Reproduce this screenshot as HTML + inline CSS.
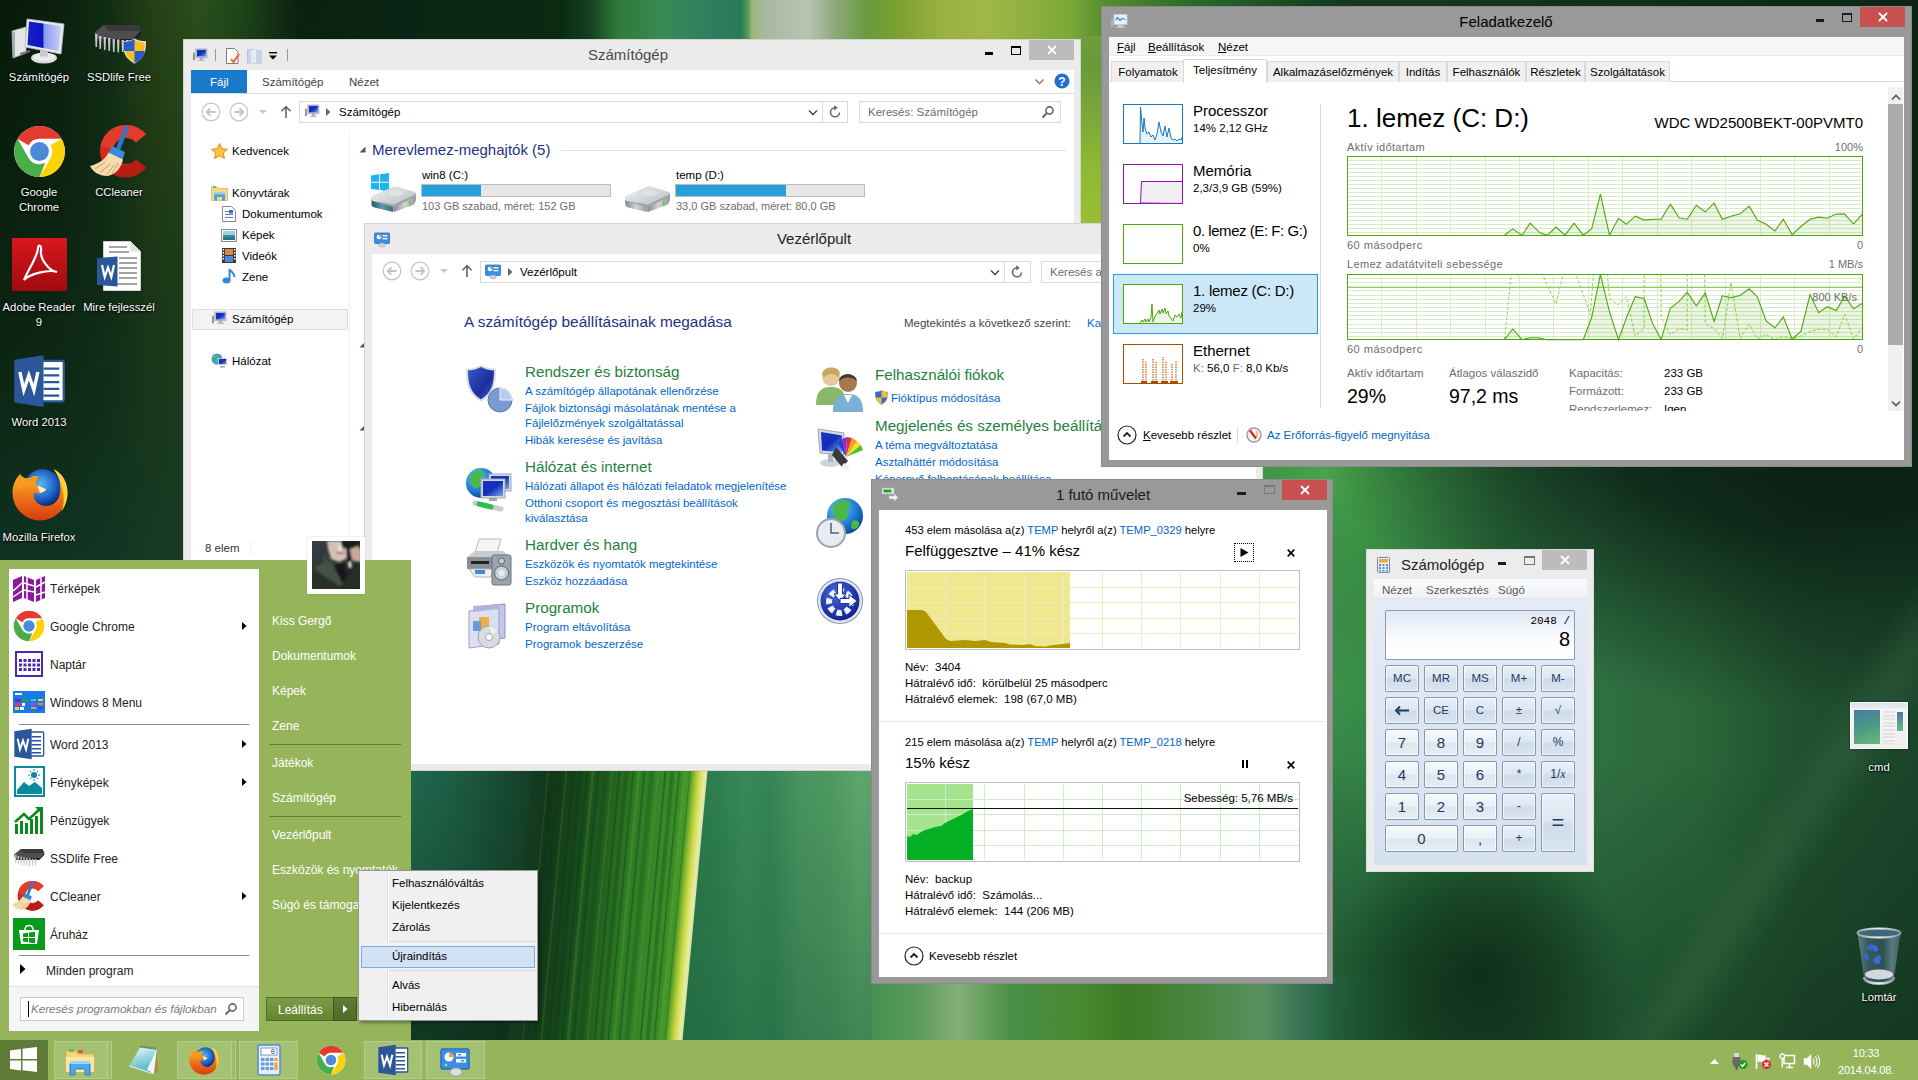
<!DOCTYPE html>
<html lang="hu"><head><meta charset="utf-8"><title>Asztal</title>
<style>
*{box-sizing:border-box;margin:0;padding:0}
html,body{width:1918px;height:1080px;overflow:hidden;background:#0f2a18}
body{position:relative;font-family:"Liberation Sans",sans-serif;font-size:11.5px;color:#000;line-height:1}
.a{position:absolute}
.t{position:absolute;white-space:nowrap;line-height:14px;height:14px}
.win{position:absolute;background:#ebebeb;border:1px solid #d4d4d4}
.win.act{background:#999;border:1px solid #8b8b8b}
.cl{position:absolute;background:#fff}
.ttl{position:absolute;font-size:15px;line-height:18px;white-space:nowrap;text-align:center;color:#000}
.lnk{color:#0066cc}
.g{color:#6d6d6d}
svg{position:absolute;overflow:visible}

.tab{position:absolute;top:24px;height:21px;background:#f0f0f0;border:1px solid #d9d9d9;border-bottom:none;white-space:nowrap;text-align:center;line-height:21px;font-size:11.5px;margin-left:1px}
.tab.sel{top:22px;height:24px;background:#fff;line-height:20px;z-index:2;margin-left:0}
.tmh{position:absolute;left:84px;font-size:15px;line-height:20px;height:20px;white-space:nowrap}
.tms{position:absolute;left:84px;font-size:11.5px;line-height:14px;height:14px;white-space:nowrap}

.cb{position:absolute;border:1px solid #8797aa;border-radius:2px;background:linear-gradient(#f6f9fc,#eaf0f7 48%,#dde6f1 52%,#e6edf6);text-align:center;font-size:15px;color:#1e395b;box-shadow:inset 0 0 0 1px rgba(255,255,255,.7)}
.cb.sm{font-size:11.500px}
.cb.op{font-size:12px;background:linear-gradient(#eaf0f8,#dce6f2 48%,#cfdcec 52%,#dae4f0)}
.cb.sm{background:linear-gradient(#eaf0f8,#dce6f2 48%,#cfdcec 52%,#dae4f0)}
.cb.eq{font-size:22px;background:linear-gradient(#eaf0f8,#dce6f2 48%,#cfdcec 52%,#dae4f0)}

.sm1{font-size:12px;color:#222;margin-top:1px}
.sm2{font-size:11.5px}
.tbb{position:absolute;top:1px;height:38px;background:#9fbc69;border:1px solid #b4cd8c}

.dl{position:absolute;margin-top:1px;text-align:center;color:#fff;font-size:11.3px;line-height:14px;height:14px;white-space:nowrap;text-shadow:0 1px 2px #000,0 0 2px #000}
/*BG*/
#bg{left:0;top:0;width:1918px;height:1080px}
</style></head><body>

<svg width="0" height="0" style="position:absolute"><defs>
<linearGradient id="scr" x1="0" y1="0" x2="1" y2="1"><stop offset="0" stop-color="#1a2fd0"/><stop offset=".5" stop-color="#1030b8"/><stop offset="1" stop-color="#7aa6f0"/></linearGradient>
<symbol id="i-comp" viewBox="0 0 16 16"><rect x="0.5" y="5" width="2" height="8" fill="#8a8f94"/><rect x="1" y="6" width="1" height="2" fill="#5fd04a"/><rect x="3.5" y="1" width="12" height="9.5" fill="#c8ccd2" stroke="#9aa0a8" stroke-width=".6"/><rect x="4.7" y="2" width="9.6" height="7" fill="url(#scr)"/><rect x="8" y="10.5" width="3" height="2" fill="#9aa0a8"/><rect x="6" y="12.5" width="7" height="1.3" fill="#b4b8be"/></symbol>
<symbol id="i-cp" viewBox="0 0 16 16"><rect x="0.5" y="1" width="15" height="10.5" rx="1" fill="#3c8fe0" stroke="#2a6fc0" stroke-width=".8"/><circle cx="5" cy="5" r="2.3" fill="#fff"/><path d="M5 5 L5 2.7 A2.3 2.3 0 0 1 7.3 5Z" fill="#f0a030"/><rect x="8.5" y="3.2" width="5" height="1.3" fill="#fff"/><rect x="8.5" y="6" width="5" height="1.3" fill="#fff"/><ellipse cx="8" cy="13" rx="3.2" ry="2" fill="#d0d4d8" stroke="#a0a4a8" stroke-width=".5"/></symbol>
<symbol id="i-back" viewBox="0 0 20 20"><circle cx="10" cy="10" r="8.8" fill="none" stroke="#c3c3c3" stroke-width="1.2"/><path d="M14.5 10H6M9.5 6.2L5.7 10l3.8 3.8" fill="none" stroke="#c3c3c3" stroke-width="1.8"/></symbol>
<symbol id="i-fwd" viewBox="0 0 20 20"><circle cx="10" cy="10" r="8.8" fill="none" stroke="#c3c3c3" stroke-width="1.2"/><path d="M5.5 10H14M10.5 6.2l3.8 3.8-3.8 3.8" fill="none" stroke="#c3c3c3" stroke-width="1.8"/></symbol>
<symbol id="i-up" viewBox="0 0 12 14"><path d="M6 13V2M1.5 6.2L6 1.7l4.5 4.5" fill="none" stroke="#666" stroke-width="1.6"/></symbol>
<symbol id="i-chev" viewBox="0 0 10 8"><path d="M1 1.5l4 4 4-4" fill="none" stroke="#555" stroke-width="1.7"/></symbol>
<symbol id="i-refresh" viewBox="0 0 14 14"><path d="M11.5 7.5a4.5 4.5 0 1 1-4.5-4.7" fill="none" stroke="#666" stroke-width="1.6"/><path d="M6.2 0.2l3.6 2.6-3.6 2.6z" fill="#666"/></symbol>
<symbol id="i-mag" viewBox="0 0 14 14"><circle cx="8.5" cy="5.5" r="3.6" fill="none" stroke="#666" stroke-width="1.6"/><path d="M6 8L1.5 12.5" stroke="#666" stroke-width="2"/></symbol>
<symbol id="i-x" viewBox="0 0 10 10"><path d="M1 1l8 8M9 1l-8 8" stroke="#fff" stroke-width="1.8"/></symbol>
</defs></svg>

<svg width="0" height="0" style="position:absolute"><defs>
<radialGradient id="ffg" cx=".45" cy=".4" r=".6"><stop offset="0" stop-color="#5ab8f0"/><stop offset=".7" stop-color="#1a5ac0"/><stop offset="1" stop-color="#0a2a80"/></radialGradient>
<linearGradient id="ffo" x1="0" y1="0" x2="0" y2="1"><stop offset="0" stop-color="#f8c830"/><stop offset=".5" stop-color="#f07a18"/><stop offset="1" stop-color="#d83a10"/></linearGradient>
<symbol id="i-chrome" viewBox="0 0 48 48"><circle cx="24" cy="24" r="23" fill="#fff"/><path d="M24 1a23 23 0 0 1 19.900 11.500H24a11.500 11.500 0 0 0-10 5.800L4.100 12.500A23 23 0 0 1 24 1z" fill="#e33b2e"/><path d="M43.900 12.500a23 23 0 0 1-19.900 34.500l10-17.200a11.500 11.500 0 0 0 0-11.500z" fill="#fdd308"/><path d="M24 47A23 23 0 0 1 4.100 12.500l10 17.300a11.500 11.500 0 0 0 10 5.700l5-1z" fill="#4aae48"/><circle cx="24" cy="24" r="10.500" fill="#fff"/><circle cx="24" cy="24" r="8.500" fill="#4a8ad8"/></symbol>
<symbol id="i-ff" viewBox="0 0 48 48"><circle cx="26" cy="20" r="15" fill="url(#ffg)"/><path d="M8 9C10 12 13 13 16 12C18 10 20 10 23 11C20 14 20 16 22 18L29 21C27 24 23 25 19 24C18 30 24 36 32 34C38 32 41 26 40 18C40 12 38 8 35 5C42 8 46 16 46 24C46 36 36 46 24 46C12 46 2 36 2 24C2 18 4 13 8 9Z" fill="url(#ffo)"/><path d="M35 5C42 8 46 16 46 24C46 30 44 35 41 39C45 30 43 17 35 5Z" fill="#fbd23a"/><path d="M8 9C10 12 13 13 16 12C18 10 20 10 23 11C21 13 20 15 21 17C16 15 10 17 7 22C6 18 6 14 8 9Z" fill="#f89a1e"/><path d="M22 18l7 3c-1 1.500-3 2.500-5 3z" fill="#fff" opacity=".85"/></symbol>
<symbol id="i-word" viewBox="0 0 48 48"><rect x="20" y="6" width="26" height="36" rx="1.500" fill="#fff" stroke="#2b579a" stroke-width="2"/><path d="M28 13h14M28 19h14M28 25h14M28 31h14M28 37h14" stroke="#2b579a" stroke-width="2.200"/><path d="M2 5l26-4v46l-26-4z" fill="#2b579a"/><path d="M7 16l3.500 16 4.500-13 4.500 13 3.500-16" fill="none" stroke="#fff" stroke-width="3"/></symbol>
<symbol id="i-cc" viewBox="0 0 60 55"><path d="M55.900 10.300A26 26 0 1 0 55.900 43.700L46 35.400A13 13 0 1 1 46 18.600Z" fill="#d8281c"/><path d="M55.900 10.300A26 26 0 0 0 10.500 22L23.200 24.500A13 13 0 0 1 46 18.600Z" fill="#e23c2c"/><path d="M14 42A26 26 0 0 0 55.900 43.700L46 35.400A13 13 0 0 1 25 36Z" fill="#b81c14"/><path d="M36.500 4L28 25" stroke="#2a78d4" stroke-width="4.500" stroke-linecap="round"/><path d="M22 22l13 6-2.500 8-14-7z" fill="#3a8ae0"/><path d="M18.500 28.500L33 35.500C31 44 26 50 18 52C10 52.500 3 48 0 42C8 40 15 36 18.500 28.500Z" fill="#f4dcae"/><path d="M5 45l10-7M10 49l10-9M16 52l8-11M22 50l6-11" stroke="#d8b070" stroke-width="1.200"/></symbol>
<symbol id="i-chip" viewBox="0 0 50 30"><path d="M2 9l10-8h34l3 6-8 8H5z" fill="#4e4e4e"/><path d="M12 1h34l3 6H16z" fill="#3a3a3a"/><path d="M2 9l3 6h36l8-8v3l-8 8H5l-3-6z" fill="#1e1e1e"/><g fill="#c4c8cc"><path d="M3 10h2.500l-.5 13h-1.500z"/><path d="M7 12h2.500l-.5 13h-1.500z"/><path d="M11.500 13h2.500l-.5 13h-1.500z"/><path d="M16 14h2.500l-.5 13h-1.500z"/><path d="M20.500 15h2.500l-.5 13h-1.500z"/><path d="M25 15.500h2.500l-.5 13h-1.500z"/><path d="M29.500 16h2.500l-.5 12h-1.500z"/><path d="M34 16h2.500l-.5 11h-1.500z"/></g></symbol>
<symbol id="i-shield" viewBox="0 0 20 22"><path d="M10 .5c3 2 6 2.500 9.500 2.500 0 9-1.500 14-9.500 18.500C2 17 .5 12 .5 3 4 3 7 2.500 10 .5z" fill="#f4c020" stroke="#e8e8e8"/><path d="M10 .5v10.500H1C.5 8 .5 5.500.5 3 4 3 7 2.500 10 .5z" fill="#2a5ac8"/><path d="M10 11h9c-1 5-3.500 8-9 10.500z" fill="#2a5ac8"/></symbol>
<symbol id="i-fold" viewBox="0 0 32 32"><path d="M2 6h10l2 3h16v18H2z" fill="#f4d67a" stroke="#d8b050"/><rect x="5" y="4" width="5" height="3" fill="#6cc04a"/><rect x="14" y="5" width="5" height="3" fill="#e05a3a"/><path d="M2 12h28v15H2z" fill="#fae8a0"/><path d="M6 18h20v12h-5v-6H11v6H6z" fill="#4aa8ec" stroke="#2a80c8"/><rect x="6" y="16" width="20" height="3" fill="#9ad4f8"/></symbol>
<symbol id="i-calc" viewBox="0 0 32 32"><rect x="5" y="1" width="22" height="30" rx="2" fill="#e4eefa" stroke="#5a8ac8" stroke-width="1.500"/><rect x="8" y="4" width="16" height="7" fill="#fff" stroke="#7a9ac8"/><text x="22" y="10" font-size="7" text-anchor="end" fill="#333" font-family="Liberation Mono,monospace">0</text><g fill="#6a9ad8"><rect x="8" y="14" width="3.500" height="3"/><rect x="12.500" y="14" width="3.500" height="3"/><rect x="17" y="14" width="3.500" height="3"/><rect x="8" y="18.500" width="3.500" height="3"/><rect x="12.500" y="18.500" width="3.500" height="3"/><rect x="17" y="18.500" width="3.500" height="3"/><rect x="8" y="23" width="3.500" height="3"/><rect x="12.500" y="23" width="3.500" height="3"/><rect x="17" y="23" width="3.500" height="3"/></g><rect x="21.500" y="14" width="3" height="3" fill="#f0a030"/><rect x="21.500" y="18.500" width="3" height="7.500" fill="#f0a030"/></symbol>
<symbol id="i-note" viewBox="0 0 32 32"><defs><linearGradient id="npg" x1=".3" y1="0" x2=".6" y2="1"><stop offset="0" stop-color="#e4f2f8"/><stop offset=".5" stop-color="#8ad0dc"/><stop offset="1" stop-color="#4aaec4"/></linearGradient></defs><path d="M28.700 4.700l1.500 21.500-4.400 2.600z" fill="#b08848"/><path d="M12 2.500l16.700 2.200-2.900 24.100L1.300 21z" fill="url(#npg)"/><path d="M1.300 21l24.500 7.800" stroke="#e8f0f4" stroke-width="1.200"/><path d="M28.700 4.700l-2.900 24.100-6.800-4.300z" fill="#f2f6f8"/><path d="M12.500 1.500l16 2.200" stroke="#5a6a7a" stroke-width="2" stroke-dasharray="1 .8"/></symbol>
<symbol id="i-cpl" viewBox="0 0 32 32"><rect x="2" y="3" width="28" height="20" rx="1.500" fill="#3c8fe0" stroke="#2a6fc0" stroke-width="1.500"/><circle cx="10" cy="11" r="4.500" fill="#fff"/><path d="M10 11V6.500A4.500 4.500 0 0 1 14.500 11z" fill="#f0a030"/><rect x="17" y="7" width="10" height="3.500" fill="#fff"/><rect x="17" y="13" width="10" height="3.500" fill="#fff"/><rect x="19" y="8" width="3" height="1.500" fill="#3c8fe0"/><rect x="22" y="14" width="3" height="1.500" fill="#3c8fe0"/><circle cx="7" cy="19" r="1.200" fill="#8f8"/><ellipse cx="17" cy="26" rx="6" ry="4" fill="#dcdfe2" stroke="#a0a4a8"/></symbol>
<symbol id="i-arr" viewBox="0 0 5 8"><path d="M0 0l4.500 4-4.500 4z" fill="#000"/></symbol>
</defs></svg>
<!--BACKGROUND-->
<svg id="bg" class="a" width="1918" height="1080" viewBox="0 0 1918 1080">
<defs>
<linearGradient id="gTop" gradientUnits="userSpaceOnUse" x1="0" x2="1918" y1="0" y2="0">
<stop offset="0.0000" stop-color="#081b0a"/><stop offset="0.0313" stop-color="#0a200d"/><stop offset="0.0574" stop-color="#112e15"/><stop offset="0.0782" stop-color="#243f15"/><stop offset="0.1043" stop-color="#2a4f1c"/><stop offset="0.1251" stop-color="#1f4518"/><stop offset="0.1564" stop-color="#0a2010"/><stop offset="0.2086" stop-color="#0a2515"/><stop offset="0.2503" stop-color="#0a2814"/><stop offset="0.2920" stop-color="#0a2a12"/><stop offset="0.3071" stop-color="#12401f"/><stop offset="0.3222" stop-color="#2f7a3a"/><stop offset="0.3452" stop-color="#3a8a55"/><stop offset="0.3681" stop-color="#2f8060"/><stop offset="0.3863" stop-color="#2a7a5a"/><stop offset="0.3900" stop-color="#5a9a5a"/><stop offset="0.3921" stop-color="#9ab878"/><stop offset="0.3983" stop-color="#a8b8a0"/><stop offset="0.4213" stop-color="#b8c4b0"/><stop offset="0.4364" stop-color="#8aa878"/><stop offset="0.4520" stop-color="#6a9a40"/><stop offset="0.4672" stop-color="#7aa030"/><stop offset="0.4901" stop-color="#98b040"/><stop offset="0.5125" stop-color="#a0b848"/><stop offset="0.5355" stop-color="#90b040"/><stop offset="0.5584" stop-color="#7aa838"/><stop offset="0.5735" stop-color="#5a9030"/><stop offset="0.6204" stop-color="#2a6a2a"/><stop offset="0.6986" stop-color="#143a20"/><stop offset="1.0000" stop-color="#0d2415"/>
</linearGradient>
<linearGradient id="gLeftV" x1="0" x2="0" y1="0" y2="1">
<stop offset="0" stop-color="#0c2812" stop-opacity="0"/><stop offset=".45" stop-color="#0e2a16" stop-opacity=".45"/><stop offset="1" stop-color="#123a2a" stop-opacity=".85"/>
</linearGradient>
<linearGradient id="gStrip" x1="0" x2="0" y1="0" y2="1">
<stop offset="0" stop-color="#6f9e3a"/><stop offset=".15" stop-color="#679a3a"/><stop offset=".4" stop-color="#7aa838"/><stop offset=".7" stop-color="#8fba32"/><stop offset="1" stop-color="#98c030"/>
</linearGradient>
<linearGradient id="gL" gradientUnits="userSpaceOnUse" x1="400" x2="560" y1="0" y2="0">
<stop offset="0" stop-color="#216a50"/><stop offset=".3" stop-color="#1f6048"/><stop offset=".6" stop-color="#194e36"/><stop offset=".85" stop-color="#153e26"/><stop offset="1" stop-color="#143a22"/>
</linearGradient>
<linearGradient id="gLV" x1="0" x2="0" y1="0" y2="1">
<stop offset="0" stop-color="#0a2814" stop-opacity="0"/><stop offset=".45" stop-color="#0a2814" stop-opacity=".25"/><stop offset="1" stop-color="#0a2814" stop-opacity=".8"/>
</linearGradient>
<linearGradient id="gR" gradientUnits="userSpaceOnUse" x1="680" x2="880" y1="0" y2="0">
<stop offset="0" stop-color="#2a7848"/><stop offset=".2" stop-color="#2f8050"/><stop offset=".32" stop-color="#3a8a58"/><stop offset=".45" stop-color="#358555"/><stop offset=".6" stop-color="#4a9560"/><stop offset=".75" stop-color="#4f9a62"/><stop offset=".9" stop-color="#5fa86c"/><stop offset="1" stop-color="#5aa568"/>
</linearGradient>
<linearGradient id="gRV" x1="0" x2="0" y1="0" y2="1">
<stop offset="0" stop-color="#1a5a38" stop-opacity="0"/><stop offset="1" stop-color="#1a5a38" stop-opacity=".45"/>
</linearGradient>
<linearGradient id="gU" gradientUnits="userSpaceOnUse" x1="860" x2="1420" y1="0" y2="0">
<stop offset="0" stop-color="#3f8f4e"/><stop offset=".1" stop-color="#5a9a5a"/><stop offset=".175" stop-color="#85b078"/><stop offset=".27" stop-color="#4a8f48"/><stop offset=".4" stop-color="#48882f"/><stop offset=".477" stop-color="#3f7a25"/><stop offset=".6" stop-color="#4a8540"/><stop offset=".715" stop-color="#5a9060"/><stop offset=".785" stop-color="#3a7555"/><stop offset=".82" stop-color="#2c6a48"/><stop offset=".845" stop-color="#266242" stop-opacity=".75"/><stop offset=".9" stop-color="#205a3a" stop-opacity=".3"/><stop offset="1" stop-color="#1a4f35" stop-opacity="0"/>
</linearGradient>
<linearGradient id="gBig" gradientUnits="userSpaceOnUse" x1="1333" y1="0" x2="1918" y2="0">
<stop offset="0" stop-color="#2f7a45"/><stop offset=".115" stop-color="#2d7542"/><stop offset=".285" stop-color="#2b6c3d"/><stop offset=".455" stop-color="#2f7042"/><stop offset=".627" stop-color="#2b6639"/><stop offset=".8" stop-color="#204f2f"/><stop offset="1" stop-color="#1a452a"/>
</linearGradient>
<radialGradient id="gBright" gradientUnits="userSpaceOnUse" cx="1325" cy="470" r="230"><stop offset="0" stop-color="#4aa64a" stop-opacity=".95"/><stop offset=".4" stop-color="#429c47" stop-opacity=".6"/><stop offset="1" stop-color="#3a8a45" stop-opacity="0"/></radialGradient>
<radialGradient id="gDark" gradientUnits="userSpaceOnUse" cx="1800" cy="380" r="330" gradientTransform="translate(1800 380) scale(1.5 1) translate(-1800 -380)"><stop offset="0" stop-color="#081a10" stop-opacity=".95"/><stop offset=".45" stop-color="#081c12" stop-opacity=".8"/><stop offset=".75" stop-color="#081c12" stop-opacity=".35"/><stop offset="1" stop-color="#081c12" stop-opacity="0"/></radialGradient><radialGradient id="gBright2" gradientUnits="userSpaceOnUse" cx="1335" cy="690" r="210"><stop offset="0" stop-color="#45a04c" stop-opacity=".6"/><stop offset="1" stop-color="#3a8a45" stop-opacity="0"/></radialGradient>
<radialGradient id="gDark2" gradientUnits="userSpaceOnUse" cx="1480" cy="975" r="150"><stop offset="0" stop-color="#06200f" stop-opacity=".7"/><stop offset=".5" stop-color="#082412" stop-opacity=".45"/><stop offset="1" stop-color="#082412" stop-opacity="0"/></radialGradient>
<linearGradient id="gBotV" gradientUnits="userSpaceOnUse" x1="0" y1="760" x2="0" y2="1045"><stop offset="0" stop-color="#0c2a18" stop-opacity="0"/><stop offset="1" stop-color="#0c2a18" stop-opacity=".5"/></linearGradient>
<linearGradient id="gBlade" gradientUnits="userSpaceOnUse" x1="-175" x2="0" y1="0" y2="0">
<stop offset="0" stop-color="#143a22"/><stop offset=".12" stop-color="#12381a"/><stop offset=".3" stop-color="#174a1c"/><stop offset=".45" stop-color="#22601f"/><stop offset=".6" stop-color="#2d7a24"/><stop offset=".75" stop-color="#348827"/><stop offset=".86" stop-color="#3a8e28"/><stop offset=".905" stop-color="#4a9a2a"/><stop offset=".925" stop-color="#8ab82f"/><stop offset=".955" stop-color="#d0dc4a"/><stop offset=".985" stop-color="#e8eca0"/><stop offset="1" stop-color="#cfe0b0"/>
</linearGradient>
<pattern id="stripes" width="46" height="10" patternUnits="userSpaceOnUse"><rect x="3" width="2" height="10" fill="#0a3010" opacity=".35"/><rect x="9" width="4" height="10" fill="#0a3010" opacity=".25"/><rect x="17" width="1.500" height="10" fill="#0a3010" opacity=".4"/><rect x="22" width="3" height="10" fill="#7ac040" opacity=".18"/><rect x="28" width="2" height="10" fill="#0a3010" opacity=".3"/><rect x="34" width="5" height="10" fill="#0a3010" opacity=".2"/><rect x="42" width="1.500" height="10" fill="#7ac040" opacity=".2"/></pattern>
<filter id="bl2" x="-20%" y="-20%" width="140%" height="140%"><feGaussianBlur stdDeviation="14"/></filter>
</defs>
<rect x="0" y="0" width="1918" height="1080" fill="#12331e"/>
<rect x="0" y="0" width="1918" height="600" fill="url(#gTop)"/>
<rect x="0" y="0" width="400" height="600" fill="url(#gLeftV)"/>
<rect x="1081" y="36" width="21" height="194" fill="url(#gStrip)"/>
<rect x="1250" y="440" width="668" height="620" fill="url(#gBig)"/>
<rect x="1250" y="440" width="668" height="620" fill="url(#gBright)"/><rect x="1250" y="440" width="668" height="620" fill="url(#gBright2)"/>
<rect x="1250" y="440" width="668" height="620" fill="url(#gDark)"/>
<rect x="1250" y="760" width="668" height="300" fill="url(#gBotV)"/>
<rect x="1250" y="760" width="668" height="300" fill="url(#gDark2)"/>
<g filter="url(#bl2)"><path d="M1935 585 L1935 650 L1660 1055 L1620 1055 Z" fill="#4a7a50" opacity=".3"/></g>
<rect x="400" y="760" width="170" height="290" fill="url(#gL)"/>
<rect x="400" y="760" width="170" height="290" fill="url(#gLV)"/>
<rect x="670" y="760" width="215" height="290" fill="url(#gR)"/>
<rect x="670" y="760" width="215" height="290" fill="url(#gRV)"/>
<rect x="872" y="975" width="548" height="70" fill="url(#gU)"/>
<g transform="translate(707.500,771) skewX(-5.300)"><rect x="-175" y="-12" width="175" height="300" fill="url(#gBlade)"/><rect x="-160" y="-12" width="143" height="300" fill="url(#stripes)"/></g>
</svg>

<!--WINDOWS PLACEHOLDER-->
<!--EXPLORER-->
<div class="win" id="ex" style="left:183px;top:39px;width:898px;height:530px">
<svg class="a" style="left:8px;top:8px" width="16" height="15"><use href="#i-comp"/></svg>
<div class="a" style="left:31px;top:9px;width:1px;height:12px;background:#9a9a9a"></div>
<svg class="a" style="left:41px;top:8px" width="17" height="16" viewBox="0 0 17 16"><path d="M1.5 .5h8l3.5 3.5v11.5h-11.5z" fill="#fff" stroke="#7a7a7a"/><path d="M6 11l2.5 3 5.5-8" fill="none" stroke="#e8703a" stroke-width="2.2"/></svg>
<svg class="a" style="left:63px;top:8px" width="15" height="16" viewBox="0 0 15 16"><path d="M.5 1.5h6l1 1.5h6.500v12h-13.500z" fill="#c5d5ea" stroke="#b4c4dc"/><rect x="4" y="2" width="5" height="13" fill="#e2ebf6"/></svg>
<svg class="a" style="left:85px;top:12px" width="8" height="8" viewBox="0 0 8 8"><rect x="0" y="0" width="8" height="1.4" fill="#000"/><path d="M0 3.5h8l-4 4z" fill="#000"/></svg>
<div class="a" style="left:103px;top:9px;width:1px;height:12px;background:#9a9a9a"></div>
<div class="ttl" style="left:344px;top:6px;width:200px;color:#4a4a4a">Számítógép</div>
<div class="a" style="left:801px;top:12px;width:8px;height:2.500px;background:#000"></div>
<div class="a" style="left:827px;top:6px;width:10px;height:9px;border:1px solid #000;border-top-width:2px"></div>
<div class="a" style="left:845px;top:0px;width:45px;height:20px;background:#bcbcbc"><svg style="left:18px;top:5px" width="10" height="10"><use href="#i-x"/></svg></div>
<div class="cl" style="left:7px;top:30px;width:883px;height:492px">
 <!--ribbon-->
 <div class="a" style="left:0;top:0;width:56px;height:23px;background:#1979ca"></div>
 <div class="t" style="left:19px;top:5px;color:#fff">Fájl</div>
 <div class="t" style="left:71px;top:5px;color:#444">Számítógép</div>
 <div class="t" style="left:158px;top:5px;color:#444">Nézet</div>
 <svg class="a" style="left:843px;top:8px" width="11" height="8" viewBox="0 0 10 8"><path d="M1 1.5l4 4 4-4" fill="none" stroke="#8a8a8a" stroke-width="1.7"/></svg>
 <svg class="a" style="left:863px;top:3px" width="16" height="16" viewBox="0 0 16 16"><circle cx="8" cy="8" r="7.5" fill="#1e6fd0"/><text x="8" y="12.5" font-size="12" font-weight="bold" fill="#fff" text-anchor="middle" font-family="Liberation Sans,sans-serif">?</text></svg>
 <div class="a" style="left:0;top:23px;width:883px;height:1px;background:#dadbdc"></div>
 <!--address-->
 <svg class="a" style="left:10px;top:32px" width="20" height="20"><use href="#i-back"/></svg>
 <svg class="a" style="left:38px;top:32px" width="20" height="20"><use href="#i-fwd"/></svg>
 <svg class="a" style="left:68px;top:40px" width="8" height="4" viewBox="0 0 8 4"><path d="M0 0h8l-4 4z" fill="#c8c8c8"/></svg>
 <svg class="a" style="left:89px;top:35px" width="12" height="14"><use href="#i-up"/></svg>
 <div class="a" style="left:108px;top:31px;width:549px;height:22px;border:1px solid #d9d9d9;background:#fff">
  <svg class="a" style="left:4px;top:2px" width="16" height="15"><use href="#i-comp"/></svg>
  <svg class="a" style="left:26px;top:6px" width="5" height="8" viewBox="0 0 5 8"><path d="M0 0l4.500 4-4.500 4z" fill="#666"/></svg>
  <div class="t" style="left:39px;top:3px">Számítógép</div>
  <svg class="a" style="left:508px;top:7px" width="10" height="8"><use href="#i-chev"/></svg>
  <div class="a" style="left:522px;top:0;width:1px;height:20px;background:#d9d9d9"></div>
  <svg class="a" style="left:528px;top:3px" width="14" height="14"><use href="#i-refresh"/></svg>
 </div>
 <div class="a" style="left:668px;top:31px;width:202px;height:22px;border:1px solid #d9d9d9;background:#fff">
  <div class="t g" style="left:8px;top:3px">Keresés: Számítógép</div>
  <svg class="a" style="left:181px;top:3px" width="14" height="14"><use href="#i-mag"/></svg>
 </div>
 <!--nav-->
 <div class="a" style="left:158px;top:61px;width:1px;height:431px;background:#f0f0f0"></div>
 <svg class="a" style="left:20px;top:73px" width="17" height="16" viewBox="0 0 17 16"><path d="M8.500 .5l2.400 5.200 5.600.6-4.200 3.800 1.200 5.500-5-2.900-5 2.900 1.200-5.500L.5 6.300l5.600-.6z" fill="#fbc53c" stroke="#e8862a" stroke-width="1"/></svg>
 <div class="t" style="left:41px;top:74px">Kedvencek</div>
 <svg class="a" style="left:20px;top:115px" width="17" height="16" viewBox="0 0 17 16"><path d="M.5 2h6l1 1.500h9v12h-16z" fill="#f3d98a" stroke="#d8b860" stroke-width=".8"/><rect x="2" y="1" width="3" height="2" fill="#6cc04a"/><path d="M3 9h11v6.500h-3v-3.500h-5v3.500h-3z" fill="#4aa3e8"/><rect x="3" y="7.500" width="11" height="2" fill="#8cc8f4"/></svg>
 <div class="t" style="left:41px;top:116px">Könyvtárak</div>
 <svg class="a" style="left:31px;top:136px" width="14" height="16" viewBox="0 0 14 16"><path d="M.5 .5h9l4 4v11h-13z" fill="#fff" stroke="#8a8a8a"/><rect x="3" y="5" width="4" height="1" fill="#5a7ab8"/><rect x="3" y="8" width="8" height="1" fill="#5a7ab8"/><rect x="3" y="11" width="8" height="1" fill="#5a7ab8"/><rect x="7" y="4" width="4" height="3.500" fill="#3a6ad0"/></svg>
 <div class="t" style="left:51px;top:137px">Dokumentumok</div>
 <svg class="a" style="left:30px;top:159px" width="16" height="13" viewBox="0 0 16 13"><rect x=".5" y=".5" width="15" height="12" fill="#fff" stroke="#8a8a8a"/><rect x="2" y="2" width="12" height="5" fill="#9ad0f0"/><rect x="2" y="6" width="12" height="5" fill="#3a9a5a"/><rect x="2" y="8.500" width="12" height="2.500" fill="#2a6ab8"/></svg>
 <div class="t" style="left:51px;top:158px">Képek</div>
 <svg class="a" style="left:31px;top:178px" width="14" height="15" viewBox="0 0 14 15"><rect x="0" y="0" width="14" height="15" fill="#3a3a3a"/><rect x="3" y="1" width="8" height="6" fill="#d88a4a"/><rect x="3" y="8" width="8" height="6" fill="#4a8ad8"/><g fill="#fff"><rect x=".7" y="1" width="1.400" height="1.600"/><rect x=".7" y="4" width="1.400" height="1.600"/><rect x=".7" y="7" width="1.400" height="1.600"/><rect x=".7" y="10" width="1.400" height="1.600"/><rect x="12" y="1" width="1.400" height="1.600"/><rect x="12" y="4" width="1.400" height="1.600"/><rect x="12" y="7" width="1.400" height="1.600"/><rect x="12" y="10" width="1.400" height="1.600"/></g></svg>
 <div class="t" style="left:51px;top:179px">Videók</div>
 <svg class="a" style="left:31px;top:198px" width="14" height="16" viewBox="0 0 14 16"><ellipse cx="4.500" cy="12.500" rx="4" ry="3" fill="#2a8ae0"/><path d="M7.500 12.500V1c1 2.500 5 3.500 5 8" fill="none" stroke="#2a8ae0" stroke-width="2"/></svg>
 <div class="t" style="left:51px;top:200px">Zene</div>
 <div class="a" style="left:1px;top:239px;width:156px;height:21px;background:#f3f3f3;border:1px solid #dedede"></div>
 <svg class="a" style="left:20px;top:241px" width="16" height="15"><use href="#i-comp"/></svg>
 <div class="t" style="left:41px;top:242px">Számítógép</div>
 <svg class="a" style="left:20px;top:283px" width="17" height="16" viewBox="0 0 17 16"><circle cx="6" cy="6" r="5.500" fill="#3a9ad8"/><path d="M2 5c2-3 5-2 5 0s-3 3-2 5" fill="none" stroke="#5ac04a" stroke-width="2"/><rect x="7" y="5" width="9" height="7" fill="#c8ccd2"/><rect x="8" y="6" width="7" height="5" fill="url(#scr)"/><rect x="9" y="13" width="5" height="1.500" fill="#9aa0a8"/></svg>
 <div class="t" style="left:41px;top:284px">Hálózat</div>
 <!--content-->
 <svg class="a" style="left:168px;top:76px" width="7" height="7" viewBox="0 0 7 7"><path d="M6.500 .5v6h-6z" fill="#555"/></svg>
 <svg class="a" style="left:168px;top:271px" width="7" height="7" viewBox="0 0 7 7"><path d="M6.500 .5v6h-6z" fill="#555"/></svg>
 <svg class="a" style="left:168px;top:354px" width="7" height="7" viewBox="0 0 7 7"><path d="M6.500 .5v6h-6z" fill="#555"/></svg>
 <div class="t" style="left:181px;top:71px;font-size:15px;line-height:18px;height:18px;color:#1e3287">Merevlemez-meghajtók (5)</div>
 <div class="a" style="left:368px;top:80px;width:507px;height:1px;background:#e2e2e2"></div>
 <svg class="a" style="left:178px;top:102px" width="48" height="40" viewBox="0 0 48 40"><defs><linearGradient id="dtop" x1="0" y1="0" x2="1" y2="1"><stop offset="0" stop-color="#f4f5f6"/><stop offset="1" stop-color="#b8bcc0"/></linearGradient><linearGradient id="dfc" x1="0" y1="0" x2="1" y2="0"><stop offset="0" stop-color="#2a5a6a"/><stop offset=".5" stop-color="#5a9ab0"/><stop offset="1" stop-color="#3a6a7a"/></linearGradient><linearGradient id="dfg" x1="0" y1="0" x2="1" y2="0"><stop offset="0" stop-color="#8a8e92"/><stop offset=".5" stop-color="#d0d4d8"/><stop offset="1" stop-color="#9a9ea2"/></linearGradient></defs><g fill="#1fb4f0"><path d="M2 3.500l8-1.200v7.400H2zM11 2.200L20 1v8.700h-9zM2 10.700h8v7.400l-8-1.200zM11 10.700h9v8.700l-9-1.300z"/></g><path d="M2 27q0-2 2-3l20-9q2-1 4 0l17 5q2 1 2 3v5q0 2-2 3l-19 8q-2 1-4 0L4 35q-2-1-2-3z" fill="#a0a4a8"/><path d="M2 27q0-2 2-3l20-9q2-1 4 0l17 5q2 1 0 3l-19 9q-2 1-4 0L4 29q-2-1-2-2z" fill="url(#dtop)"/><path d="M3 29l21 6v5L4 35q-1-1-1-3z" fill="url(#dfc)"/><path d="M25 35l21-10v5q0 2-2 3l-19 7z" fill="url(#dfg)"/><ellipse cx="26" cy="21" rx="9" ry="4" fill="#dfe1e3" stroke="#c0c4c8" stroke-width=".5"/><path d="M40 29l1.500-.7v5l-1.500.7z" fill="#38e038"/></svg>
 <div class="t" style="left:231px;top:98px">win8 (C:)</div>
 <div class="a" style="left:230px;top:114px;width:190px;height:13px;border:1px solid #bcbcbc;background:#e6e6e6"><div class="a" style="left:0;top:0;width:59px;height:11px;background:#26a0da"></div></div>
 <div class="t g" style="left:231px;top:129px;font-size:11px">103 GB szabad, méret: 152 GB</div>
 <svg class="a" style="left:432px;top:114px" width="48" height="28" viewBox="0 12 48 28"><path d="M2 27q0-2 2-3l20-9q2-1 4 0l17 5q2 1 2 3v5q0 2-2 3l-19 8q-2 1-4 0L4 35q-2-1-2-3z" fill="#a0a4a8"/><path d="M2 27q0-2 2-3l20-9q2-1 4 0l17 5q2 1 0 3l-19 9q-2 1-4 0L4 29q-2-1-2-2z" fill="url(#dtop)"/><path d="M3 29l21 6v5L4 35q-1-1-1-3z" fill="url(#dfg)"/><path d="M25 35l21-10v5q0 2-2 3l-19 7z" fill="url(#dfg)"/><ellipse cx="26" cy="21" rx="9" ry="4" fill="#dfe1e3" stroke="#c0c4c8" stroke-width=".5"/><path d="M40 29l1.500-.7v5l-1.500.7z" fill="#38e038"/></svg>
 <div class="t" style="left:485px;top:98px">temp (D:)</div>
 <div class="a" style="left:484px;top:114px;width:190px;height:13px;border:1px solid #bcbcbc;background:#e6e6e6"><div class="a" style="left:0;top:0;width:110px;height:11px;background:#26a0da"></div></div>
 <div class="t g" style="left:485px;top:129px;font-size:11px">33,0 GB szabad, méret: 80,0 GB</div>
 <!--status-->
 <div class="t" style="left:14px;top:471px;color:#333">8 elem</div>
 <div class="a" style="left:59px;top:470px;width:1px;height:16px;background:#f0f0f0"></div>
</div>
</div>
<!--CONTROL PANEL-->
<div class="win" id="cp" style="left:364px;top:223px;width:899px;height:548px">
<svg class="a" style="left:9px;top:8px" width="16" height="16"><use href="#i-cp"/></svg>
<div class="ttl" style="left:349px;top:6px;width:200px;color:#222">Vezérlőpult</div>
<div class="cl" style="left:7px;top:30px;width:884px;height:510px">
 <svg class="a" style="left:10px;top:7px" width="20" height="20"><use href="#i-back"/></svg>
 <svg class="a" style="left:38px;top:7px" width="20" height="20"><use href="#i-fwd"/></svg>
 <svg class="a" style="left:68px;top:15px" width="8" height="4" viewBox="0 0 8 4"><path d="M0 0h8l-4 4z" fill="#c8c8c8"/></svg>
 <svg class="a" style="left:89px;top:10px" width="12" height="14"><use href="#i-up"/></svg>
 <div class="a" style="left:108px;top:7px;width:551px;height:22px;border:1px solid #d9d9d9;background:#fff">
  <svg class="a" style="left:4px;top:2px" width="16" height="16"><use href="#i-cp"/></svg>
  <svg class="a" style="left:27px;top:6px" width="5" height="8" viewBox="0 0 5 8"><path d="M0 0l4.500 4-4.500 4z" fill="#666"/></svg>
  <div class="t" style="left:39px;top:3px">Vezérlőpult</div>
  <svg class="a" style="left:509px;top:7px" width="10" height="8"><use href="#i-chev"/></svg>
  <div class="a" style="left:523px;top:0;width:1px;height:20px;background:#d9d9d9"></div>
  <svg class="a" style="left:529px;top:3px" width="14" height="14"><use href="#i-refresh"/></svg>
 </div>
 <div class="a" style="left:669px;top:7px;width:205px;height:22px;border:1px solid #d9d9d9;background:#fff">
  <div class="t g" style="left:8px;top:3px">Keresés a Vezérlőpulton</div>
 </div>
 <div class="t" style="left:92px;top:58px;font-size:15.4px;line-height:20px;height:20px;color:#1e3287">A számítógép beállításainak megadása</div>
 <div class="t" style="left:532px;top:62px;color:#444">Megtekintés a következő szerint:</div>
 <div class="t lnk" style="left:715px;top:62px">Kategória</div>
 <!--left col-->
 <svg class="a" style="left:93px;top:111px" width="48" height="48" viewBox="0 0 48 48"><defs><linearGradient id="shg" x1="0" y1="0" x2="1" y2="1"><stop offset="0" stop-color="#3a5ad0"/><stop offset=".6" stop-color="#1a2f9a"/><stop offset="1" stop-color="#4a6ad8"/></linearGradient></defs><path d="M16 1c5 3 9 3.500 14 3.500 0 14-2 24-14 31C4 28.500 2 18.500 2 4.500 7 4.500 11 4 16 1z" fill="url(#shg)" stroke="#d8dce4" stroke-width="2"/><circle cx="35" cy="35" r="12" fill="#7a9ad0" stroke="#5a7ab8"/><path d="M35 35V23a12 12 0 0 1 12 12z" fill="#b8ccec" stroke="#e8eef8"/></svg>
 <div class="t" style="left:153px;top:110px;font-size:15.2px;line-height:20px;height:20px;margin-top:-2px;color:#1e823c">Rendszer és biztonság</div>
 <div class="t lnk" style="left:153px;top:130px">A számítógép állapotának ellenőrzése</div>
 <div class="t lnk" style="left:153px;top:147px">Fájlok biztonsági másolatának mentése a</div>
 <div class="t lnk" style="left:153px;top:162px">Fájlelőzmények szolgáltatással</div>
 <div class="t lnk" style="left:153px;top:179px">Hibák keresése és javítása</div>

 <svg class="a" style="left:93px;top:211px" width="48" height="48" viewBox="0 0 48 48"><defs><radialGradient id="glb" cx=".35" cy=".3" r=".8"><stop offset="0" stop-color="#6ac8f8"/><stop offset=".6" stop-color="#1a78d0"/><stop offset="1" stop-color="#0a3a90"/></radialGradient></defs><circle cx="16" cy="18" r="15" fill="url(#glb)"/><path d="M6 10c4-5 10-6 12-3s-3 6-1 9-4 8-7 7-7-8-4-13zM20 24c3-2 7 0 6 3s-5 4-7 2z" fill="#4ab848"/><rect x="24" y="9" width="22" height="17" fill="#d4d8e0" stroke="#a0a6b0"/><rect x="26" y="11" width="18" height="13" fill="url(#scr)"/><rect x="16" y="14" width="24" height="19" fill="#d4d8e0" stroke="#a0a6b0"/><rect x="18" y="16" width="20" height="15" fill="url(#scr)"/><rect x="24" y="33" width="8" height="3" fill="#a0a6b0"/><path d="M10 38l26 6" stroke="#c8ccd0" stroke-width="5" stroke-linecap="round"/><path d="M14 39l12 3" stroke="#2ac04a" stroke-width="5" stroke-linecap="round"/></svg>
 <div class="t" style="left:153px;top:205px;font-size:15.2px;line-height:20px;height:20px;margin-top:-2px;color:#1e823c">Hálózat és internet</div>
 <div class="t lnk" style="left:153px;top:225px">Hálózati állapot és hálózati feladatok megjelenítése</div>
 <div class="t lnk" style="left:153px;top:242px">Otthoni csoport és megosztási beállítások</div>
 <div class="t lnk" style="left:153px;top:257px">kiválasztása</div>

 <svg class="a" style="left:93px;top:285px" width="48" height="48" viewBox="0 0 48 48"><path d="M14 0h22l-4 14H10z" fill="#f4f4f4" stroke="#b8b8b8"/><path d="M2 18l8-6h28l8 6v12H2z" fill="#c8ccd0"/><path d="M2 18h44v12H2z" fill="#8a9098"/><rect x="6" y="22" width="18" height="3" fill="#222"/><path d="M4 30l6 8h16l2-8z" fill="#f0f0f0" stroke="#b0b0b0"/><rect x="10" y="31" width="10" height="4" fill="#3a8ae0"/><rect x="27" y="16" width="19" height="30" rx="2" fill="#9aa4ae" stroke="#6a747e"/><circle cx="36.500" cy="34" r="7" fill="#c8d0d8" stroke="#5a646e"/><circle cx="36.500" cy="34" r="3" fill="#e8ecf0"/><circle cx="36.500" cy="22" r="3" fill="#c8d0d8" stroke="#5a646e"/></svg>
 <div class="t" style="left:153px;top:283px;font-size:15.2px;line-height:20px;height:20px;margin-top:-2px;color:#1e823c">Hardver és hang</div>
 <div class="t lnk" style="left:153px;top:303px">Eszközök és nyomtatók megtekintése</div>
 <div class="t lnk" style="left:153px;top:320px">Eszköz hozzáadása</div>

 <svg class="a" style="left:93px;top:349px" width="48" height="48" viewBox="0 0 48 48"><path d="M10 4l30-3v34l-30 4z" fill="#c4c8e8" stroke="#8a90c0"/><path d="M4 8l30-3v36l-30 4z" fill="#dcdff4" stroke="#9aa0c8"/><path d="M8 3l26-2v5l-26 3z" fill="#b0b4d8"/><rect x="14" y="14" width="10" height="12" fill="#f0b040"/><rect x="8" y="18" width="8" height="10" fill="#6a9ad8"/><circle cx="24" cy="34" r="11" fill="#d8dce0" stroke="#a0a4a8"/><circle cx="24" cy="34" r="3.500" fill="#fff" stroke="#a0a4a8"/><path d="M24 23a11 11 0 0 1 9 5l-6 4z" fill="#eef0f2"/></svg>
 <div class="t" style="left:153px;top:346px;font-size:15.2px;line-height:20px;height:20px;margin-top:-2px;color:#1e823c">Programok</div>
 <div class="t lnk" style="left:153px;top:366px">Program eltávolítása</div>
 <div class="t lnk" style="left:153px;top:383px">Programok beszerzése</div>
 <!--right col-->
 <svg class="a" style="left:444px;top:111px" width="48" height="48" viewBox="0 0 48 48"><circle cx="15" cy="12" r="9" fill="#e8c89a"/><path d="M6 10c0-9 16-10 18-2l-2 4c-4-4-10-4-14 0z" fill="#c8a860"/><path d="M0 40c0-14 6-18 15-18s15 4 15 18z" fill="#8ab868"/><circle cx="32" cy="18" r="9" fill="#a87850"/><path d="M23 16c0-9 17-9 18 0l-3-2c-4-2-9-2-12 0z" fill="#3a3a3a"/><path d="M17 47c0-14 6-18 15-18s15 4 15 18z" fill="#7ab0d8"/><path d="M28 30l4 8 4-8z" fill="#fff"/></svg>
 <div class="t" style="left:503px;top:113px;font-size:15.2px;line-height:20px;height:20px;margin-top:-2px;color:#1e823c">Felhasználói fiókok</div>
 <svg class="a" style="left:503px;top:136px" width="13" height="15" viewBox="0 0 13 15"><path d="M6.500 .5c2 1.200 4 1.500 6 1.500 0 6-1 10-6 12.500C1.500 12 .5 8 .5 2c2 0 4-.3 6-1.500z" fill="#f0c030" stroke="#8a8a8a" stroke-width=".6"/><path d="M6.500 .5v7H.7C.5 5.500.5 3.500.5 2c2 0 4-.3 6-1.500z" fill="#3a6ad0"/><path d="M6.500 7.500h5.700c-.7 3-2.200 5-5.700 6.500z" fill="#3a6ad0"/></svg>
 <div class="t lnk" style="left:519px;top:137px">Fióktípus módosítása</div>

 <svg class="a" style="left:444px;top:173px" width="48" height="44" viewBox="0 0 48 44"><path d="M2 2l26 4v22l-24-2z" fill="#d4d8e0" stroke="#a0a6b0"/><path d="M5 5l21 3.500v17l-20-2z" fill="url(#scr)"/><ellipse cx="14" cy="36" rx="10" ry="4" fill="#d0d4d8"/><rect x="12" y="27" width="5" height="8" fill="#b0b6be"/><g transform="translate(30 30)"><path d="M0 0L-8-14l4-4z" fill="#2a3ad0"/><path d="M0 0L-4-18l5-2z" fill="#8a2ad0"/><path d="M0 0L1-20l5 1z" fill="#e02a4a"/><path d="M0 0L6-19l5 3z" fill="#f0a020"/><path d="M0 0L11-16l4 4z" fill="#f0e020"/><path d="M0 0L15-12l2 5z" fill="#4ac030"/><path d="M-10-10l12 14-6 6-10-12z" fill="#3a3a3a"/><path d="M-2 6l6 4-4 3-5-3z" fill="#eee"/></g></svg>
 <div class="t" style="left:503px;top:164px;font-size:15.2px;line-height:20px;height:20px;margin-top:-2px;color:#1e823c">Megjelenés és személyes beállítások</div>
 <div class="t lnk" style="left:503px;top:184px">A téma megváltoztatása</div>
 <div class="t lnk" style="left:503px;top:201px">Asztalháttér módosítása</div>
 <div class="t lnk" style="left:503px;top:218px">Képernyő felbontásának beállítása</div>

 <svg class="a" style="left:444px;top:243px" width="48" height="52" viewBox="0 0 48 52"><circle cx="29" cy="19" r="18" fill="url(#glb)"/><path d="M18 8c5-6 14-6 16-2s-4 6-2 10-5 9-9 8-8-10-5-16zM36 24c4-2 8 0 7 4s-6 5-8 3z" fill="#4ab848"/><circle cx="15" cy="36" r="14" fill="#e8ecf2" stroke="#9aa4b0" stroke-width="2"/><path d="M15 26v10h8" fill="none" stroke="#5a646e" stroke-width="1.600"/></svg>
 <svg class="a" style="left:444px;top:323px" width="48" height="48" viewBox="0 0 48 48"><defs><radialGradient id="eoa" cx=".4" cy=".3" r=".8"><stop offset="0" stop-color="#4a6ae0"/><stop offset=".7" stop-color="#1a2fa0"/><stop offset="1" stop-color="#101f80"/></radialGradient></defs><circle cx="24" cy="24" r="23" fill="#8a92b0"/><circle cx="24" cy="24" r="22" fill="#e4e8f0"/><circle cx="24" cy="24" r="19.500" fill="url(#eoa)"/><circle cx="24" cy="25" r="11" fill="none" stroke="#fff" stroke-width="6" stroke-dasharray="5.500 3.100" stroke-dashoffset="2" opacity=".92"/><path d="M21.500 6h5v11h3.500l-6 7-6-7h3.500z" fill="#fff" stroke="#1a2fa0" stroke-width="1"/><path d="M24 21.500h9v-4l8 6.500-8 6.500v-4h-9z" fill="#fff" stroke="#1a2fa0" stroke-width="1"/></svg>
</div>
</div>
<!--TASK MANAGER-->
<div class="win act" id="tm" style="left:1101px;top:6px;width:811px;height:461px">
<svg class="a" style="left:9px;top:7px" width="17" height="15" viewBox="0 0 17 15"><rect x="0" y="5" width="2" height="8" fill="#b0b4b8"/><rect x=".5" y="6" width="1" height="2" fill="#5fd04a"/><rect x="3" y=".5" width="13" height="10" fill="#e8f0f8" stroke="#c8ccd2"/><path d="M4.500 6l2-2.500 2.500 3 2-2 3.500 1" fill="none" stroke="#2a9ae0" stroke-width="1.300"/><rect x="7" y="11" width="5" height="1.500" fill="#c8ccd2"/><rect x="5.500" y="12.500" width="8" height="1.200" fill="#d8dce0"/></svg>
<div class="ttl" style="left:304px;top:6px;width:200px">Feladatkezelő</div>
<div class="a" style="left:714px;top:12px;width:8px;height:2.500px;background:#1a1a1a"></div>
<div class="a" style="left:740px;top:6px;width:10px;height:9px;border:1px solid #1a1a1a;border-top-width:2px"></div>
<div class="a" style="left:758px;top:0px;width:45px;height:20px;background:#c75050"><svg style="left:18px;top:5px" width="10" height="10"><use href="#i-x"/></svg></div>
<div class="cl" style="left:7px;top:30px;width:795px;height:423px">
 <div class="a" style="left:0;top:0;width:795px;height:19px;background:#f5f6f7;border-bottom:1px solid #e8e9ea"></div>
 <div class="t" style="left:8px;top:3px"><u>F</u>ájl</div>
 <div class="t" style="left:39px;top:3px"><u>B</u>eállítások</div>
 <div class="t" style="left:109px;top:3px"><u>N</u>ézet</div>
 <!--tabs-->
 <div class="a" style="left:0;top:44px;width:795px;height:1px;background:#d9d9d9"></div>
 <div class="tab" style="left:1px;width:74px">Folyamatok</div>
 <div class="tab" style="left:157px;width:132px">Alkalmazáselőzmények</div>
 <div class="tab" style="left:289px;width:48px">Indítás</div>
 <div class="tab" style="left:337px;width:79px">Felhasználók</div>
 <div class="tab" style="left:416px;width:59px">Részletek</div>
 <div class="tab" style="left:475px;width:85px">Szolgáltatások</div>
 <div class="tab sel" style="left:74px;width:84px">Teljesítmény</div>
 <!--left list-->
 <div class="a" style="left:4px;top:237px;width:205px;height:60px;background:#cce8f7;border:1px solid #26a0da"></div>
 <div class="a" style="left:211px;top:67px;width:1px;height:304px;background:#dcdcdc"></div>
 <svg class="a" style="left:14px;top:67px" width="60" height="40" viewBox="0 0 60 40"><rect x=".5" y=".5" width="59" height="39" fill="#fff" stroke="#117dbb"/><path d="M17 39 L17.5 3 L19 20 L20 28 L21 14 L22 24 L24 30 L26 28 L28 33 L30 31 L32 36 L34 30 L36 18 L38 28 L40 32 L42 22 L44 33 L46 24 L48 34 L50 36 L52 35 L54 37 L56 35 L58 36 L59 33 L59 39Z" fill="#e6f1f8"/><path d="M17 39 L17.5 3 L19 20 L20 28 L21 14 L22 24 L24 30 L26 28 L28 33 L30 31 L32 36 L34 30 L36 18 L38 28 L40 32 L42 22 L44 33 L46 24 L48 34 L50 36 L52 35 L54 37 L56 35 L58 36 L59 33" fill="none" stroke="#117dbb" stroke-width="1"/></svg>
 <div class="tmh" style="top:64px">Processzor</div><div class="tms" style="top:84px">14% 2,12 GHz</div>
 <svg class="a" style="left:14px;top:127px" width="60" height="40" viewBox="0 0 60 40"><rect x=".5" y=".5" width="59" height="39" fill="#fff" stroke="#8b12ae"/><path d="M17.500 39L18.500 17.500H59.500V39.500Z" fill="#f1eef3" stroke="#8b12ae"/></svg>
 <div class="tmh" style="top:124px">Memória</div><div class="tms" style="top:144px">2,3/3,9 GB (59%)</div>
 <svg class="a" style="left:14px;top:187px" width="60" height="40" viewBox="0 0 60 40"><rect x=".5" y=".5" width="59" height="39" fill="#fff" stroke="#4da60c"/></svg>
 <div class="tmh" style="top:184px;letter-spacing:-.45px">0. lemez (E: F: G:)</div><div class="tms" style="top:204px">0%</div>
 <svg class="a" style="left:14px;top:247px" width="60" height="40" viewBox="0 0 60 40"><rect x=".5" y=".5" width="59" height="39" fill="#fff" stroke="#4da60c"/><path d="M17 39 L19 36 L20 38 L22 35 L23 38 L25 35 L26 38 L28 33 L29 20 L30 38 L32 32 L34 30 L36 26 L37 30 L39 25 L40 29 L42 24 L43 30 L45 27 L46 32 L48 34 L50 37 L52 31 L54 33 L56 30 L58 34 L59 28 L59 39Z" fill="#edf6e6"/><path d="M17 39 L19 36 L20 38 L22 35 L23 38 L25 35 L26 38 L28 33 L29 20 L30 38 L32 32 L34 30 L36 26 L37 30 L39 25 L40 29 L42 24 L43 30 L45 27 L46 32 L48 34 L50 37 L52 31 L54 33 L56 30 L58 34 L59 28" fill="none" stroke="#4da60c" stroke-width="1"/></svg>
 <div class="tmh" style="top:244px;letter-spacing:-.25px">1. lemez (C: D:)</div><div class="tms" style="top:264px">29%</div>
 <svg class="a" style="left:14px;top:307px" width="60" height="40" viewBox="0 0 60 40"><rect x=".5" y=".5" width="59" height="39" fill="#fff" stroke="#a74f01"/><path d="M20 39V14M23 39V18M30 39V14M33 39V17M40 39V13M43 39V17M49 39V19M53 39V17" stroke="#d8844a" stroke-width="1.600" stroke-dasharray="1.500 1"/><path d="M18 38h6M28 38h7M38 38h7M47 38h8" stroke="#a74f01" stroke-width="2"/></svg>
 <div class="tmh" style="top:304px">Ethernet</div><div class="tms" style="top:324px"><span class="g">K:</span> 56,0 <span class="g">F:</span> 8,0 Kb/s</div>
 <!--right-->
 <div class="t" style="left:238px;top:63px;font-size:26px;line-height:36px;height:36px">1. lemez (C: D:)</div>
 <div class="t" style="left:504px;top:76px;width:250px;text-align:right;font-size:15px;line-height:20px;height:20px">WDC WD2500BEKT-00PVMT0</div>
 <div class="t g" style="left:238px;top:103px;font-size:11px;letter-spacing:.3px">Aktív időtartam</div>
 <div class="t g" style="left:654px;top:103px;width:100px;text-align:right;font-size:11px">100%</div>
 <svg class="a" style="left:238px;top:119px" width="516" height="80" viewBox="0 0 516 80"><rect x="0" y="0" width="516" height="80" fill="#fff"/><path d="M34.5 0V80M69.5 0V80M103.5 0V80M138.5 0V80M172.5 0V80M206.5 0V80M241.5 0V80M275.5 0V80M310.5 0V80M344.5 0V80M378.5 0V80M413.5 0V80M447.5 0V80M482.5 0V80M0 4.5H516M0 8.5H516M0 12.5H516M0 16.5H516M0 20.5H516M0 24.5H516M0 28.5H516M0 32.5H516M0 36.5H516M0 40.5H516M0 44.5H516M0 48.5H516M0 52.5H516M0 56.5H516M0 60.5H516M0 64.5H516M0 68.5H516M0 72.5H516M0 76.5H516" stroke="#d9eacb" stroke-width="1" fill="none"/><path d="M157.5 79.2 L165.7 72.9 L175.1 79.2 L183.2 67.1 L192.9 76.8 L200.5 79.2 L209.0 71.1 L218.0 79.2 L227.1 67.1 L236.2 79.2 L244.6 72.9 L253.4 38.1 L262.5 79.2 L271.5 62.3 L279.4 68.3 L288.2 60.2 L297.2 64.1 L305.7 63.2 L314.2 63.2 L323.3 48.1 L332.3 62.0 L340.2 63.2 L349.3 49.3 L358.3 55.9 L367.1 47.2 L375.3 63.2 L384.0 60.2 L393.1 57.8 L402.2 50.2 L410.3 64.1 L419.1 68.3 L427.9 75.0 L436.3 63.2 L445.1 78.6 L453.9 70.5 L463.0 63.2 L471.7 61.1 L480.2 62.3 L489.3 58.1 L497.7 58.1 L506.5 68.0 L515.6 57.8 L515.6 79.5 L157.5 79.5Z" fill="#4da60c" fill-opacity=".1"/><path d="M157.5 79.2 L165.7 72.9 L175.1 79.2 L183.2 67.1 L192.9 76.8 L200.5 79.2 L209.0 71.1 L218.0 79.2 L227.1 67.1 L236.2 79.2 L244.6 72.9 L253.4 38.1 L262.5 79.2 L271.5 62.3 L279.4 68.3 L288.2 60.2 L297.2 64.1 L305.7 63.2 L314.2 63.2 L323.3 48.1 L332.3 62.0 L340.2 63.2 L349.3 49.3 L358.3 55.9 L367.1 47.2 L375.3 63.2 L384.0 60.2 L393.1 57.8 L402.2 50.2 L410.3 64.1 L419.1 68.3 L427.9 75.0 L436.3 63.2 L445.1 78.6 L453.9 70.5 L463.0 63.2 L471.7 61.1 L480.2 62.3 L489.3 58.1 L497.7 58.1 L506.5 68.0 L515.6 57.8" fill="none" stroke="#4da60c" stroke-width="1.100"/><rect x=".5" y=".5" width="515" height="79" fill="none" stroke="#4da60c"/></svg>
 <div class="t g" style="left:238px;top:201px;font-size:11px;letter-spacing:.5px">60 másodperc</div>
 <div class="t g" style="left:654px;top:201px;width:100px;text-align:right;font-size:11px">0</div>
 <div class="t g" style="left:238px;top:220px;font-size:11px;letter-spacing:.4px">Lemez adatátviteli sebessége</div>
 <div class="t g" style="left:654px;top:220px;width:100px;text-align:right;font-size:11px">1 MB/s</div>
 <svg class="a" style="left:238px;top:237px" width="516" height="66" viewBox="0 0 516 66"><rect x="0" y="0" width="516" height="66" fill="#fff"/><path d="M34.5 0V66M69.5 0V66M103.5 0V66M138.5 0V66M172.5 0V66M206.5 0V66M241.5 0V66M275.5 0V66M310.5 0V66M344.5 0V66M378.5 0V66M413.5 0V66M447.5 0V66M482.5 0V66M0 4.5H516M0 8.5H516M0 12.5H516M0 16.5H516M0 21.5H516M0 25.5H516M0 29.5H516M0 33.5H516M0 37.5H516M0 41.5H516M0 45.5H516M0 50.5H516M0 54.5H516M0 58.5H516M0 62.5H516" stroke="#d9eacb" stroke-width="1" fill="none"/><path d="M0 13.500H516" stroke="#8fcf5f" stroke-width="1"/><path d="M157.5 65.6 L164.2 0.3 L195.3 0.3 L209.0 30.2 L216.2 0.3 L229.2 0.3 L243.4 40.8 L246.4 0.3 L260.4 0.3 L262.5 24.5 L270.9 30.8 L279.4 22.7 L288.2 62.0 L297.2 54.4 L297.2 0.3 L313.9 0.3 L314.2 43.8 L323.3 60.5 L332.3 54.4 L340.2 55.9 L340.2 0.3 L357.7 0.3 L358.3 49.9 L367.1 54.4 L375.3 64.4 L384.0 8.5 L393.1 64.4 L402.2 49.9 L410.3 65.0 L419.1 60.5 L427.9 65.6 L436.3 62.6 L445.1 65.0 L453.9 62.0 L463.0 57.5 L471.7 55.3 L480.2 55.3 L489.3 62.9 L497.7 40.2 L506.5 65.0 L515.6 52.9" fill="none" stroke="#8cd645" stroke-width="1" stroke-dasharray="3 2"/><path d="M157.5 65.6 L165.7 55.0 L175.1 65.6 L183.2 63.8 L191.4 63.8 L199.0 65.6 L236.2 65.6 L244.6 43.8 L253.4 0.3 L262.5 37.8 L271.5 65.6 L279.4 43.8 L288.2 22.7 L297.2 24.5 L305.7 49.9 L314.2 65.6 L323.3 34.2 L332.3 27.2 L340.2 18.1 L349.3 31.8 L358.3 19.1 L367.1 47.5 L375.3 21.8 L384.0 23.6 L393.1 21.5 L402.2 14.8 L410.3 22.7 L419.1 46.9 L427.9 53.8 L436.3 42.9 L445.1 65.0 L453.9 57.5 L463.0 20.6 L471.7 38.7 L480.2 32.7 L489.3 36.6 L497.7 22.1 L506.5 34.8 L515.6 29.3 L515.6 65.5 L157.5 65.5Z" fill="#4da60c" fill-opacity=".12"/><path d="M157.5 65.6 L165.7 55.0 L175.1 65.6 L183.2 63.8 L191.4 63.8 L199.0 65.6 L236.2 65.6 L244.6 43.8 L253.4 0.3 L262.5 37.8 L271.5 65.6 L279.4 43.8 L288.2 22.7 L297.2 24.5 L305.7 49.9 L314.2 65.6 L323.3 34.2 L332.3 27.2 L340.2 18.1 L349.3 31.8 L358.3 19.1 L367.1 47.5 L375.3 21.8 L384.0 23.6 L393.1 21.5 L402.2 14.8 L410.3 22.7 L419.1 46.9 L427.9 53.8 L436.3 42.9 L445.1 65.0 L453.9 57.5 L463.0 20.6 L471.7 38.7 L480.2 32.7 L489.3 36.6 L497.7 22.1 L506.5 34.8 L515.6 29.3" fill="none" stroke="#4da60c" stroke-width="1.100"/><rect x=".5" y=".5" width="515" height="65" fill="none" stroke="#4da60c"/><text x="510" y="27" font-size="11" fill="#6d6d6d" text-anchor="end" font-family="Liberation Sans,sans-serif">800 KB/s</text></svg>
 <div class="t g" style="left:238px;top:305px;font-size:11px;letter-spacing:.5px">60 másodperc</div>
 <div class="t g" style="left:654px;top:305px;width:100px;text-align:right;font-size:11px">0</div>
 <div class="t g" style="left:238px;top:329px">Aktív időtartam</div>
 <div class="t" style="left:238px;top:346px;font-size:19.500px;line-height:26px;height:26px">29%</div>
 <div class="t g" style="left:340px;top:329px">Átlagos válaszidő</div>
 <div class="t" style="left:340px;top:346px;font-size:19.500px;line-height:26px;height:26px">97,2 ms</div>
 <div class="t g" style="left:460px;top:329px">Kapacitás:</div><div class="t" style="left:555px;top:329px">233 GB</div>
 <div class="t g" style="left:460px;top:347px">Formázott:</div><div class="t" style="left:555px;top:347px">233 GB</div>
 <div class="a" style="left:455px;top:363px;width:200px;height:11px;overflow:hidden"><div class="t g" style="left:5px;top:2px">Rendszerlemez:</div><div class="t" style="left:100px;top:2px">Igen</div></div>
 <!--scrollbar-->
 <div class="a" style="left:779px;top:50px;width:15px;height:324px;background:#f0f0f0"></div>
 <div class="a" style="left:779px;top:67px;width:15px;height:241px;background:#ababab"></div>
 <svg class="a" style="left:782px;top:56px" width="10" height="8" viewBox="0 0 10 8"><path d="M1 6.500l4-4 4 4" fill="none" stroke="#555" stroke-width="1.700"/></svg>
 <svg class="a" style="left:782px;top:363px" width="10" height="8"><use href="#i-chev"/></svg>
 <!--bottom-->
 <svg class="a" style="left:8px;top:388px" width="20" height="20" viewBox="0 0 20 20"><circle cx="10" cy="10" r="9" fill="#fff" stroke="#222" stroke-width="1.200"/><path d="M6.500 11.500l3.500-3.500 3.500 3.500" fill="none" stroke="#222" stroke-width="1.800"/></svg>
 <div class="t" style="left:34px;top:391px"><u>K</u>evesebb részlet</div>
 <div class="a" style="left:128px;top:390px;width:1px;height:16px;background:#d8d8d8"></div>
 <svg class="a" style="left:137px;top:390px" width="16" height="16" viewBox="0 0 16 16"><circle cx="8" cy="8" r="7" fill="#f4f4f4" stroke="#9a9a9a" stroke-width="1.400"/><path d="M4 3.500l6 8" stroke="#d02a1a" stroke-width="2.200"/><path d="M11 4v7" stroke="#e88a2a" stroke-width="1"/></svg>
 <div class="t lnk" style="left:158px;top:391px">Az Erőforrás-figyelő megnyitása</div>
</div>
</div>
<!--COPY-->
<div class="win act" id="cd" style="left:871px;top:479px;width:462px;height:505px">
<svg class="a" style="left:10px;top:8px" width="16" height="14" viewBox="0 0 16 14"><rect x="0" y="0" width="12" height="6" fill="#e8ecf0" stroke="#b0b4b8" stroke-width=".6"/><rect x="1.500" y="1.500" width="8" height="3" fill="#1aa81a"/><path d="M7 8h5v-2.500l4 4-4 4v-2.500h-5z" fill="#f4f4f4" stroke="#b0b4b8" stroke-width=".6"/></svg>
<div class="ttl" style="left:131px;top:6px;width:200px;color:#1a1a1a">1 futó művelet</div>
<div class="a" style="left:365px;top:12px;width:9px;height:2.500px;background:#1a1a1a"></div>
<div class="a" style="left:392px;top:5px;width:11px;height:9px;border:1px solid #777;border-top-width:2px"></div>
<div class="a" style="left:410px;top:0px;width:45px;height:20px;background:#c75050"><svg style="left:18px;top:5px" width="10" height="10"><use href="#i-x"/></svg></div>
<div class="cl" style="left:7px;top:30px;width:448px;height:467px"><div class="a" style="left:-1px;top:0px">
 <div class="t" style="left:27px;top:13px;font-size:11.200px">453 elem másolása a(z) <span class="lnk">TEMP</span> helyről a(z) <span class="lnk">TEMP_0329</span> helyre</div>
 <div class="t" style="left:27px;top:31px;font-size:15px;line-height:20px;height:20px">Felfüggesztve – 41% kész</div>
 <div class="a" style="left:356px;top:33px;width:20px;height:19px;border:1px dotted #000"><svg style="left:5px;top:4px" width="9" height="9" viewBox="0 0 9 9"><path d="M.5 0l8 4.500-8 4.500z" fill="#000"/></svg></div>
 <svg class="a" style="left:409px;top:39px" width="8" height="8" viewBox="0 0 8 8"><path d="M.7 .7l6.600 6.600M7.300 .7L.7 7.300" stroke="#000" stroke-width="1.700"/></svg>
 <svg class="a" style="left:27px;top:60px" width="395" height="80" viewBox="0 0 395 80"><rect x=".5" y=".5" width="394" height="79" fill="#fff" stroke="#bcbcbc"/><rect x="2" y="2" width="163" height="76" fill="#f0e891"/><path d="M40.5 2V77M79.5 2V77M119.5 2V77M158.5 2V77M197.5 2V77M236.5 2V77M275.5 2V77M315.5 2V77M354.5 2V77M2 17.5H393M2 32.5H393M2 48.5H393M2 63.5H393" stroke="#efeac0" stroke-width="1" fill="none"/><path d="M2 78V40H17L21 42 41 69 45 71 60 70 70 71 80 70 86 72 100 73 105 74.500 118 75 125 74 130 76 140 76.500 148 75 158 74 165 73V78Z" fill="#b09800"/></svg>
 <div class="t" style="left:27px;top:150px">Név:&nbsp; 3404</div>
 <div class="t" style="left:27px;top:166px">Hátralévő idő:&nbsp; körülbelül 25 másodperc</div>
 <div class="t" style="left:27px;top:182px">Hátralévő elemek:&nbsp; 198 (67,0 MB)</div>
 <div class="a" style="left:1px;top:211px;width:447px;height:1px;background:#e6e6e6"></div>
 <div class="t" style="left:27px;top:225px;font-size:11.200px">215 elem másolása a(z) <span class="lnk">TEMP</span> helyről a(z) <span class="lnk">TEMP_0218</span> helyre</div>
 <div class="t" style="left:27px;top:243px;font-size:15px;line-height:20px;height:20px">15% kész</div>
 <div class="a" style="left:364px;top:250px;width:2px;height:8px;background:#000"></div><div class="a" style="left:368px;top:250px;width:2px;height:8px;background:#000"></div>
 <svg class="a" style="left:409px;top:251px" width="8" height="8" viewBox="0 0 8 8"><path d="M.7 .7l6.600 6.600M7.300 .7L.7 7.300" stroke="#000" stroke-width="1.700"/></svg>
 <svg class="a" style="left:27px;top:272px" width="395" height="80" viewBox="0 0 395 80"><rect x=".5" y=".5" width="394" height="79" fill="#fff" stroke="#bcbcbc"/><rect x="2" y="2" width="66" height="76" fill="#a6e38f"/><path d="M40.5 2V77M79.5 2V77M119.5 2V77M158.5 2V77M197.5 2V77M236.5 2V77M275.5 2V77M315.5 2V77M354.5 2V77M2 17.5H393M2 32.5H393M2 48.5H393M2 63.5H393" stroke="#c9efc9" stroke-width="1" fill="none"/><path d="M2 78V54L5 55 8 52 12 53 16 50 20 48 24 47 30 45 36 44 40 41 46 38 52 35 58 32 63 29 68 27V78Z" fill="#06b025"/><path d="M2 26.500H393" stroke="#111" stroke-width="1"/><text x="388" y="20" font-size="11.500" fill="#000" text-anchor="end" font-family="Liberation Sans,sans-serif">Sebesség: 5,76 MB/s</text></svg>
 <div class="t" style="left:27px;top:362px">Név:&nbsp; backup</div>
 <div class="t" style="left:27px;top:378px">Hátralévő idő:&nbsp; Számolás...</div>
 <div class="t" style="left:27px;top:394px">Hátralévő elemek:&nbsp; 144 (206 MB)</div>
 <div class="a" style="left:1px;top:423px;width:447px;height:1px;background:#e6e6e6"></div>
 <svg class="a" style="left:26px;top:436px" width="20" height="20" viewBox="0 0 20 20"><circle cx="10" cy="10" r="9" fill="#fff" stroke="#222" stroke-width="1.200"/><path d="M6.500 11.500l3.500-3.500 3.500 3.500" fill="none" stroke="#222" stroke-width="1.800"/></svg>
 <div class="t" style="left:51px;top:439px">Kevesebb részlet</div>
</div></div>
</div>
<!--CALC-->
<div class="win" id="ca" style="left:1366px;top:549px;width:228px;height:323px;background:#ececec;border-color:#dcdcdc">
<svg class="a" style="left:10px;top:7px" width="13" height="16" viewBox="0 0 13 16"><rect x=".5" y=".5" width="12" height="15" rx="1" fill="#e8f0fa" stroke="#6a8ab8"/><rect x="2" y="2" width="9" height="3.500" fill="#f0a83a"/><g fill="#5a8ad0"><rect x="2" y="7" width="2" height="2"/><rect x="5.500" y="7" width="2" height="2"/><rect x="9" y="7" width="2" height="2"/><rect x="2" y="10" width="2" height="2"/><rect x="5.500" y="10" width="2" height="2"/><rect x="9" y="10" width="2" height="2"/><rect x="2" y="13" width="2" height="1.500"/><rect x="5.500" y="13" width="2" height="1.500"/><rect x="9" y="13" width="2" height="1.500"/></g></svg>
<div class="t" style="left:34px;top:5px;font-size:15px;line-height:20px;height:20px;color:#222">Számológép</div>
<div class="a" style="left:131px;top:12px;width:8px;height:2.500px;background:#1a1a1a"></div>
<div class="a" style="left:157px;top:6px;width:11px;height:9px;border:1px solid #777;border-top-width:2px"></div>
<div class="a" style="left:175px;top:0px;width:45px;height:20px;background:#bcbcbc"><svg style="left:18px;top:5px" width="10" height="10"><use href="#i-x"/></svg></div>
<div class="cl" style="left:7px;top:29px;width:213px;height:286px;background:linear-gradient(#e4ecf7,#d6e1f0)">
 <div class="a" style="left:0;top:0;width:213px;height:20px;background:linear-gradient(#fafbfc,#eef1f5);border-bottom:1px solid #dfe3e8"></div>
 <div class="t" style="left:8px;top:4px;color:#5a5a5a">Nézet</div><div class="t" style="left:52px;top:4px;color:#5a5a5a">Szerkesztés</div><div class="t" style="left:124px;top:4px;color:#5a5a5a">Súgó</div>
 <div class="a" style="left:11px;top:31px;width:190px;height:50px;border:1px solid #8e9cad;border-radius:2px;background:linear-gradient(#dfe8f5,#fbfcfe 60%,#fff)"></div>
 <div class="t" style="left:100px;top:35px;width:96px;text-align:right;font-family:'Liberation Mono',monospace;font-size:11px">2048 /</div>
 <div class="t" style="left:100px;top:48px;width:96px;text-align:right;font-size:20px;line-height:24px;height:24px">8</div>
 <div class="cb sm" style="left:11px;top:86px;width:34px;height:27px;line-height:25px">MC</div><div class="cb sm" style="left:50px;top:86px;width:34px;height:27px;line-height:25px">MR</div><div class="cb sm" style="left:89px;top:86px;width:34px;height:27px;line-height:25px">MS</div><div class="cb sm" style="left:128px;top:86px;width:34px;height:27px;line-height:25px">M+</div><div class="cb sm" style="left:167px;top:86px;width:34px;height:27px;line-height:25px">M-</div><div class="cb sm" style="left:11px;top:118px;width:34px;height:27px;line-height:25px"><svg style="position:static;vertical-align:middle" width="14" height="9" viewBox="0 0 14 9"><path d="M14 4.500H3M5 .5L1 4.500l4 4" fill="none" stroke="#1e395b" stroke-width="2"/></svg></div><div class="cb sm" style="left:50px;top:118px;width:34px;height:27px;line-height:25px">CE</div><div class="cb sm" style="left:89px;top:118px;width:34px;height:27px;line-height:25px">C</div><div class="cb sm" style="left:128px;top:118px;width:34px;height:27px;line-height:25px">±</div><div class="cb sm" style="left:167px;top:118px;width:34px;height:27px;line-height:25px">√</div><div class="cb " style="left:11px;top:150px;width:34px;height:27px;line-height:25px">7</div><div class="cb " style="left:50px;top:150px;width:34px;height:27px;line-height:25px">8</div><div class="cb " style="left:89px;top:150px;width:34px;height:27px;line-height:25px">9</div><div class="cb op" style="left:128px;top:150px;width:34px;height:27px;line-height:25px">/</div><div class="cb op" style="left:167px;top:150px;width:34px;height:27px;line-height:25px">%</div><div class="cb " style="left:11px;top:182px;width:34px;height:27px;line-height:25px">4</div><div class="cb " style="left:50px;top:182px;width:34px;height:27px;line-height:25px">5</div><div class="cb " style="left:89px;top:182px;width:34px;height:27px;line-height:25px">6</div><div class="cb op" style="left:128px;top:182px;width:34px;height:27px;line-height:25px">*</div><div class="cb op" style="left:167px;top:182px;width:34px;height:27px;line-height:25px">1/<i style="font-family:Liberation Serif,serif">x</i></div><div class="cb " style="left:11px;top:214px;width:34px;height:27px;line-height:25px">1</div><div class="cb " style="left:50px;top:214px;width:34px;height:27px;line-height:25px">2</div><div class="cb " style="left:89px;top:214px;width:34px;height:27px;line-height:25px">3</div><div class="cb op" style="left:128px;top:214px;width:34px;height:27px;line-height:25px">-</div><div class="cb " style="left:11px;top:246px;width:73px;height:27px;line-height:25px">0</div><div class="cb " style="left:89px;top:246px;width:34px;height:27px;line-height:25px">,</div><div class="cb op" style="left:128px;top:246px;width:34px;height:27px;line-height:25px">+</div><div class="cb eq" style="left:167px;top:214px;width:34px;height:59px;line-height:57px">=</div>
</div>
</div>
<!--START-->
<div class="a" id="sm" style="left:0;top:560px;width:411px;height:480px;background:#96b55b">
<div class="cl" style="left:9px;top:9px;width:250px;height:462px">
<div class="a" style="left:4px;top:3px;width:32px;height:32px"><svg width="32" height="28" viewBox="0 0 32 28" style="top:3px"><g fill="#8a1a9a"><path d="M0 5l9-4v22l-9 4zM11 1l10 4v22l-10-4zM23 5l9-4v22l-9 4z"/></g><g stroke="#fff" stroke-width="1.500" fill="none"><path d="M0 16l9-8M0 22l9-6M11 8l10 3M11 15l10 2M14 2v24M23 12l9-5M23 20l9-3M28 3v22"/></g></svg></div><div class="t sm1" style="left:41px;top:12px">Térképek</div><div class="a" style="left:4px;top:41px;width:32px;height:32px"><svg width="32" height="32"><use href="#i-chrome"/></svg></div><div class="t sm1" style="left:41px;top:50px">Google Chrome</div><svg class="a" style="left:233px;top:53px" width="5" height="8"><use href="#i-arr"/></svg><div class="a" style="left:4px;top:79px;width:32px;height:32px"><svg width="28" height="26" viewBox="0 0 28 26" style="left:2px;top:3px"><rect x="1" y="1" width="26" height="24" fill="#fff" stroke="#4a2ab0" stroke-width="2"/><g fill="#4a2ab0"><rect x="4" y="8" width="3" height="3"/><rect x="8.500" y="8" width="3" height="3"/><rect x="13" y="8" width="3" height="3"/><rect x="17.500" y="8" width="3" height="3"/><rect x="22" y="8" width="3" height="3"/><rect x="4" y="12.500" width="3" height="3"/><rect x="8.500" y="12.500" width="3" height="3"/><rect x="13" y="12.500" width="3" height="3"/><rect x="17.500" y="12.500" width="3" height="3"/><rect x="22" y="12.500" width="3" height="3"/><rect x="4" y="17" width="3" height="3"/><rect x="8.500" y="17" width="3" height="3"/><rect x="13" y="17" width="3" height="3"/><rect x="17.500" y="17" width="3" height="3"/><rect x="22" y="17" width="3" height="3"/></g></svg></div><div class="t sm1" style="left:41px;top:88px">Naptár</div><div class="a" style="left:4px;top:117px;width:32px;height:32px"><svg width="32" height="22" viewBox="0 0 32 22" style="top:5px"><rect width="32" height="22" fill="#1a78e8"/><rect x="2" y="2" width="7" height="2" fill="#fff"/><rect x="2" y="8" width="6" height="3" fill="#5a2ad8"/><rect x="9" y="8" width="6" height="3" fill="#1aa83a"/><rect x="2" y="12" width="6" height="3" fill="#e82a8a"/><rect x="9" y="12" width="3" height="3" fill="#fff"/><rect x="18" y="8" width="5" height="2" fill="#2ad8a8"/><rect x="25" y="8" width="5" height="2" fill="#e8d82a"/><rect x="18" y="12" width="5" height="2" fill="#e82ad8"/><rect x="25" y="12" width="5" height="2" fill="#f08a2a"/><rect x="2" y="16" width="4" height="3" fill="#e8d82a"/><rect x="7" y="16" width="4" height="3" fill="#fff"/><rect x="18" y="16" width="5" height="2" fill="#f0a02a"/><rect x="25" y="16" width="5" height="2" fill="#2a5ad8"/></svg></div><div class="t sm1" style="left:41px;top:126px">Windows 8 Menu</div><div class="a" style="left:10px;top:155px;width:230px;height:1px;background:#8a8a8a"></div><div class="a" style="left:4px;top:159px;width:32px;height:32px"><svg width="32" height="32"><use href="#i-word"/></svg></div><div class="t sm1" style="left:41px;top:168px">Word 2013</div><svg class="a" style="left:233px;top:171px" width="5" height="8"><use href="#i-arr"/></svg><div class="a" style="left:4px;top:197px;width:32px;height:32px"><svg width="31" height="31" viewBox="0 0 31 31" style="left:1px"><rect x="1" y="1" width="29" height="29" fill="#fff" stroke="#0a8a9a" stroke-width="2"/><path d="M3 24l7-8 5 4 6-4 7 6v6H3z" fill="#0a8a9a"/><circle cx="20" cy="9" r="3" fill="#0a8a9a"/><g stroke="#0a8a9a" stroke-width="1"><path d="M20 3v2M20 13v2M14 9h2M24 9h2M16 5l1.300 1.300M24 5l-1.300 1.300M16 13l1.300-1.300M24 13l-1.300-1.300"/></g></svg></div><div class="t sm1" style="left:41px;top:206px">Fényképek</div><svg class="a" style="left:233px;top:209px" width="5" height="8"><use href="#i-arr"/></svg><div class="a" style="left:4px;top:235px;width:32px;height:32px"><svg width="30" height="28" viewBox="0 0 30 28" style="left:1px;top:2px"><g fill="#0a8a1a"><rect x="1" y="18" width="3" height="10"/><rect x="6" y="15" width="3" height="13"/><rect x="11" y="17" width="3" height="11"/><rect x="16" y="13" width="3" height="15"/><rect x="21" y="10" width="3" height="18"/><rect x="26" y="6" width="3" height="22"/></g><path d="M1 16l9-8 5 5 12-11" fill="none" stroke="#0a8a1a" stroke-width="2.500"/><path d="M21 1h8v8z" fill="#0a8a1a"/></svg></div><div class="t sm1" style="left:41px;top:244px">Pénzügyek</div><div class="a" style="left:4px;top:273px;width:32px;height:32px"><svg width="32" height="20" style="top:6px"><use href="#i-chip"/></svg></div><div class="t sm1" style="left:41px;top:282px">SSDlife Free</div><div class="a" style="left:4px;top:311px;width:32px;height:32px"><svg width="34" height="34" style="left:-1px;top:-1px"><use href="#i-cc"/></svg></div><div class="t sm1" style="left:41px;top:320px">CCleaner</div><svg class="a" style="left:233px;top:323px" width="5" height="8"><use href="#i-arr"/></svg><div class="a" style="left:4px;top:349px;width:32px;height:32px"><svg width="32" height="32" viewBox="0 0 32 32"><rect width="32" height="32" fill="#0a9a1a"/><path d="M6 12h20l-2 14H8z" fill="#fff"/><path d="M12 12c0-6 8-6 8 0" fill="none" stroke="#fff" stroke-width="1.500"/><g fill="#0a9a1a"><path d="M10 15.500l5-.7v4.200h-5zM16 14.600l6-.8v5.200h-6zM10 20h5v4.200l-5-.7zM16 20h6v5.200l-6-.8z"/></g></svg></div><div class="t sm1" style="left:41px;top:358px">Áruház</div><div class="a" style="left:10px;top:386px;width:230px;height:1px;background:#8a8a8a"></div>
<svg class="a" style="left:11px;top:395px" width="6" height="10" viewBox="0 0 6 10"><path d="M0 0l5.500 5-5.500 5z" fill="#000"/></svg>
<div class="t sm1" style="left:37px;top:394px">Minden program</div>
<div class="a" style="left:0;top:417px;width:250px;height:45px;background:#f4f5f6;border-top:1px solid #e0e2e4"></div>
<div class="a" style="left:11px;top:428px;width:224px;height:24px;border:1px solid #c8cacc;background:#fff">
 <div class="a" style="left:7px;top:3px;width:1px;height:16px;background:#000"></div>
 <div class="t g" style="left:10px;top:4px;font-style:italic;font-size:11.600px;color:#7a7a7a">Keresés programokban és fájlokban</div>
 <svg class="a" style="left:203px;top:4px" width="14" height="14"><use href="#i-mag"/></svg>
</div>
</div>
<div class="a" style="left:307px;top:-23px;width:58px;height:57px;background:#fff;box-shadow:0 0 1px rgba(0,0,0,.3)">
 <svg class="a" style="left:5px;top:4px" width="48" height="48" viewBox="0 0 48 48"><defs><linearGradient id="ph1" x1="0" y1="0" x2="1" y2="1"><stop offset="0" stop-color="#3a4048"/><stop offset=".5" stop-color="#2a3230"/><stop offset="1" stop-color="#1a2220"/></linearGradient><filter id="phb"><feGaussianBlur stdDeviation=".8"/></filter><clipPath id="phc"><rect width="48" height="48"/></clipPath></defs><g clip-path="url(#phc)"><rect width="48" height="48" fill="url(#ph1)"/><g filter="url(#phb)"><path d="M15 0h22l1 10-4 8-7 3-8-3-3-10z" fill="#d4c0b4"/><path d="M29 0h18v6l-8 4-6-3-3 2z" fill="#1a1c1e"/><path d="M27 1l4 6-2 4-3-1z" fill="#f0e4dc"/><path d="M24 11h8l-1 2h-6z" fill="#9a6a64"/><path d="M38 8l8-3 3 4v12l-8-1-3-6z" fill="#c8a894"/><path d="M34 5l4 4 2 10-2 14-3-12z" fill="#14181a"/><path d="M0 30l14-12 8 8 12 14 14-20v28H0z" fill="#2a3228"/><path d="M13 12l3 6 10 8-2 4-14-12z" fill="#3e4c40"/><path d="M2 28l12-9 18 22-4 4z" fill="#445244"/><path d="M22 24l10-2 3 14-5 6z" fill="#14181a"/><path d="M36 22l3-2 1 6-3 1z" fill="#e8e0d0"/><path d="M30 44l10-14 8-6v24H28z" fill="#262e28"/></g></g></svg>
 
</div>
<div class="t sm1" style="left:272px;top:53px;color:#fff">Kiss Gergő</div><div class="t sm1" style="left:272px;top:88px;color:#fff">Dokumentumok</div><div class="t sm1" style="left:272px;top:123px;color:#fff">Képek</div><div class="t sm1" style="left:272px;top:158px;color:#fff">Zene</div><div class="t sm1" style="left:272px;top:195px;color:#fff">Játékok</div><div class="t sm1" style="left:272px;top:230px;color:#fff">Számítógép</div><div class="t sm1" style="left:272px;top:267px;color:#fff">Vezérlőpult</div><div class="t sm1" style="left:272px;top:302px;color:#fff">Eszközök és nyomtatók</div><div class="t sm1" style="left:272px;top:337px;color:#fff">Súgó és támogatás</div><div class="a" style="left:269px;top:184px;width:132px;height:1px;background:#5f7f35"></div><div class="a" style="left:269px;top:256px;width:132px;height:1px;background:#5f7f35"></div>
<div class="a" style="left:266px;top:437px;width:68px;height:24px;border:1px solid #4f6d28;background:linear-gradient(#7d9c48,#64842f)"></div>
<div class="t sm1" style="left:278px;top:442px;color:#fff">Leállítás</div>
<div class="a" style="left:333px;top:437px;width:24px;height:24px;border:1px solid #40581f;background:linear-gradient(#5f7d33,#4e6a27)"><svg style="left:9px;top:7px" width="5" height="8" viewBox="0 0 5 8"><path d="M0 0l4.500 4-4.500 4z" fill="#fff"/></svg></div>
</div>
<!--SUBMENU-->
<div class="a" id="sub" style="left:358px;top:870px;width:180px;height:151px;background:#f0f0f0;border:1px solid #979797;box-shadow:2px 2px 3px rgba(0,0,0,.35)">
<div class="a" style="left:28px;top:2px;width:1px;height:145px;background:#e0e0e0"></div><div class="a" style="left:29px;top:2px;width:1px;height:145px;background:#fff"></div>
<div class="a" style="left:2px;top:75px;width:174px;height:22px;background:#d1e2f4;border:1px solid #78aee5"></div>
<div class="t sm2" style="left:33px;top:5px">Felhasználóváltás</div>
<div class="t sm2" style="left:33px;top:27px">Kijelentkezés</div>
<div class="t sm2" style="left:33px;top:49px">Zárolás</div>
<div class="a" style="left:30px;top:70px;width:146px;height:1px;background:#d7d7d7"></div>
<div class="t sm2" style="left:33px;top:78px">Újraindítás</div>
<div class="a" style="left:30px;top:99px;width:146px;height:1px;background:#d7d7d7"></div>
<div class="t sm2" style="left:33px;top:107px">Alvás</div>
<div class="t sm2" style="left:33px;top:129px">Hibernálás</div>
</div>
<!--TASKBAR-->
<div class="a" id="tb" style="left:0;top:1040px;width:1918px;height:40px;background:#96b55b">
<div class="a" style="left:0;top:0;width:48px;height:40px;background:#5e7c38"></div>
<svg class="a" style="left:10px;top:7px" width="27" height="25" viewBox="0 0 27 25"><path d="M0 3.500l11-1.500v10H0zM12.500 1.800L27 0v12H12.500zM0 13.500h11v10l-11-1.500zM12.500 13.500H27V25l-14.500-1.800z" fill="#fff"/></svg>
<div class="tbb" style="left:58px;width:54px"></div><div class="tbb" style="left:54px;width:54px;background:#a5c172"></div>
<div class="tbb" style="left:181px;width:55px"></div><div class="tbb" style="left:177px;width:55px;background:#a5c172"></div>
<div class="tbb" style="left:239px;width:59px;background:#a5c172"></div>
<div class="tbb" style="left:364px;width:58px;background:#a5c172"></div>
<div class="tbb" style="left:426px;width:59px;background:#a5c172"></div>
<svg class="a" style="left:64px;top:5px" width="32" height="32"><use href="#i-fold"/></svg>
<svg class="a" style="left:128px;top:5px" width="32" height="32"><use href="#i-note"/></svg>
<svg class="a" style="left:188px;top:4px" width="32" height="32"><use href="#i-ff"/></svg>
<svg class="a" style="left:253px;top:4px" width="32" height="32"><use href="#i-calc"/></svg>
<svg class="a" style="left:316px;top:5px" width="30" height="30"><use href="#i-chrome"/></svg>
<svg class="a" style="left:377px;top:4px" width="32" height="32"><use href="#i-word"/></svg>
<svg class="a" style="left:439px;top:6px" width="32" height="32"><use href="#i-cpl"/></svg>
<svg class="a" style="left:1710px;top:19px" width="9" height="5" viewBox="0 0 9 5"><path d="M0 5l4.500-5 4.500 5z" fill="#fff"/></svg>
<svg class="a" style="left:1731px;top:13px" width="17" height="17" viewBox="0 0 17 17"><rect x="3" y="0" width="5" height="4" fill="#d8d8d8"/><path d="M1.500 4h8v7l-2 3h-4l-2-3z" fill="#6a6a6a"/><rect x="4.500" y="13" width="2" height="4" fill="#5a5a5a"/><circle cx="12" cy="11.500" r="4.500" fill="#1a9a2a"/><path d="M9.800 11.500l1.700 2 2.700-3.500" fill="none" stroke="#fff" stroke-width="1.400"/></svg>
<svg class="a" style="left:1755px;top:13px" width="17" height="17" viewBox="0 0 17 17"><path d="M1.500 1v15" stroke="#fff" stroke-width="1.600"/><path d="M2.500 2c3-1.500 5 1.500 8 0v7c-3 1.500-5-1.500-8 0z" fill="#fff"/><path d="M10 4l5 1-1 4" fill="#e8e8e8"/><circle cx="11.500" cy="11.500" r="4.500" fill="#e02a2a"/><path d="M9.500 9.500l4 4M13.500 9.500l-4 4" stroke="#fff" stroke-width="1.500"/></svg>
<svg class="a" style="left:1779px;top:13px" width="17" height="17" viewBox="0 0 17 17"><rect x="5" y="2.500" width="10.500" height="8" fill="none" stroke="#fff" stroke-width="1.500"/><path d="M7 14.500h7M10.500 10.500v4" stroke="#fff" stroke-width="1.500"/><rect x="1" y="1" width="4.500" height="4.500" rx="2" fill="#96b55b" stroke="#fff" stroke-width="1.300"/><path d="M3.200 5.500v9" stroke="#fff" stroke-width="1.300"/></svg>
<svg class="a" style="left:1803px;top:13px" width="17" height="17" viewBox="0 0 17 17"><path d="M1 5.500h3l4-4v14l-4-4H1z" fill="#fff" stroke="#fff" stroke-width=".5"/><path d="M10 5.500c1.300 1.500 1.300 4.500 0 6M12.200 3.500c2.300 2.500 2.300 7.500 0 10M14.400 2c3 3.500 3 9.500 0 13" fill="none" stroke="#fff" stroke-width="1.100"/></svg>
<div class="t" style="left:1826px;top:6px;width:80px;text-align:center;color:#fff;font-size:11px;letter-spacing:-.2px">10:33</div>
<div class="t" style="left:1826px;top:23px;width:80px;text-align:center;color:#fff;font-size:11px;letter-spacing:-.2px">2014.04.08.</div>
</div>
<!--DESKTOP ICONS-->
<div id="dk">
<svg class="a" style="left:10px;top:17px" width="56" height="48" viewBox="0 0 56 48"><defs><linearGradient id="dscr" x1="0" y1="0" x2="1" y2="0"><stop offset="0" stop-color="#1820c8"/><stop offset=".45" stop-color="#0a14c0"/><stop offset=".5" stop-color="#8a9af0"/><stop offset="1" stop-color="#c8d0f8"/></linearGradient></defs><path d="M2 14l14-4v26l-13 5z" fill="#e4e6e8" stroke="#b0b4b8" stroke-width=".8"/><path d="M2 14l3 1v25l-2 1z" fill="#a8acb0"/><path d="M10 36l10-3v2l-10 3z" fill="#707478"/><path d="M17 2l37 5-3 30-36-7z" fill="#e8eaec" stroke="#b8bcc0" stroke-width=".8"/><path d="M19 4.500l32 4.500-2.500 25-31-6z" fill="url(#dscr)"/><ellipse cx="34" cy="41" rx="13" ry="5.500" fill="#d8dadc"/><ellipse cx="34" cy="40" rx="11" ry="4" fill="#ececee"/><path d="M30 33l8 1.500v5h-8z" fill="#c8cacc"/></svg>
<svg class="a" style="left:92px;top:24px" width="50" height="30"><use href="#i-chip"/></svg>
<svg class="a" style="left:123px;top:38px" width="23" height="26"><use href="#i-shield"/></svg>
<svg class="a" style="left:13px;top:125px" width="53" height="53"><use href="#i-chrome"/></svg>
<svg class="a" style="left:90px;top:124px" width="60" height="55"><use href="#i-cc"/></svg>
<div class="a" style="left:12px;top:238px;width:55px;height:53px;background:linear-gradient(#d8181c,#a00a10)"><svg style="left:8px;top:6px" width="40" height="42" viewBox="0 0 40 42"><path d="M4 36c4-10 14-24 14-32 0-4 4-3 3 3-1 8 8 20 16 21-8-3-28 2-33 8z" fill="none" stroke="#fff" stroke-width="2.200"/></svg></div>
<svg class="a" style="left:97px;top:241px" width="44" height="50" viewBox="0 0 44 50"><path d="M6.500 .5h27l10 10v39h-37z" fill="#fff" stroke="#d0d0d0"/><path d="M33.500 .5v10h10z" fill="#e0e0e0"/><path d="M12 6h18M12 11h20M22 17h18M22 22h18M22 27h18M22 32h18M22 37h18M12 43h28" stroke="#a4a4a4" stroke-width="2.200"/><path d="M0 17l20.500-1.500v30L0 44z" fill="#2b579a"/><path d="M5 24l2.700 12 3.300-9.500 3.300 9.500 2.700-12" fill="none" stroke="#fff" stroke-width="2.200"/></svg>
<svg class="a" style="left:10px;top:354px" width="58" height="54"><use href="#i-word"/></svg>
<svg class="a" style="left:10px;top:463px" width="60" height="60"><use href="#i-ff"/></svg>
<div class="dl" style="left:-6px;top:69px;width:90px">Számítógép</div><div class="dl" style="left:74px;top:69px;width:90px">SSDlife Free</div><div class="dl" style="left:-6px;top:184px;width:90px">Google</div><div class="dl" style="left:-6px;top:199px;width:90px">Chrome</div><div class="dl" style="left:74px;top:184px;width:90px">CCleaner</div><div class="dl" style="left:-6px;top:299px;width:90px">Adobe Reader</div><div class="dl" style="left:-6px;top:314px;width:90px">9</div><div class="dl" style="left:74px;top:299px;width:90px">Mire fejlesszél</div><div class="dl" style="left:-6px;top:414px;width:90px">Word 2013</div><div class="dl" style="left:-6px;top:529px;width:90px">Mozilla Firefox</div>
<div class="a" style="left:1850px;top:702px;width:58px;height:47px;background:linear-gradient(#dfe3e8 0,#e8eaee 5px,#f6f6f6 6px,#eeeeee 100%);border:1px solid #fafafa;box-shadow:0 0 2px rgba(0,0,0,.6)"><div class="a" style="left:3px;top:7px;width:26px;height:34px;background:linear-gradient(160deg,#4a78a8,#4a9a84 50%,#6ab878)"></div><div class="a" style="left:32px;top:8px;width:12px;height:33px;background:repeating-linear-gradient(#e2e2e2 0 2px,#f4f4f4 2px 3.600px)"></div><div class="a" style="left:46px;top:9px;width:6px;height:19px;background:linear-gradient(#4a78a8,#6ab878)"></div></div>
<svg class="a" style="left:1856px;top:927px" width="46" height="58" viewBox="0 0 46 58"><defs><linearGradient id="bin" x1="0" x2="1"><stop offset="0" stop-color="#7a98a0" stop-opacity=".75"/><stop offset=".25" stop-color="#3a5f68" stop-opacity=".8"/><stop offset=".6" stop-color="#33585f" stop-opacity=".8"/><stop offset=".8" stop-color="#6a8a90" stop-opacity=".8"/><stop offset="1" stop-color="#4a6a72" stop-opacity=".85"/></linearGradient><linearGradient id="binr" x1="0" x2="1"><stop offset="0" stop-color="#9aa0a4"/><stop offset=".5" stop-color="#f0f2f4"/><stop offset="1" stop-color="#8a9094"/></linearGradient></defs><path d="M1.500 6l6.500 44c0 4 6 6.500 15 6.500s15-2.500 15-6.500l6.500-44z" fill="url(#bin)"/><path d="M8 50c0 4 6 6.500 15 6.500s15-2.500 15-6.500" fill="none" stroke="url(#binr)" stroke-width="2.500"/><ellipse cx="23" cy="47.500" rx="14" ry="5" fill="#e4e8ea" opacity=".9"/><ellipse cx="23" cy="6" rx="21.500" ry="4.500" fill="#3a6878" stroke="url(#binr)" stroke-width="2"/><g fill="#3a6ae0"><path d="M10 22l4-5 4 2-2 5z" opacity=".8"/><path d="M16 18l5 1 1 5-4 1z"/><path d="M8 27l4 0 1 6-3 1z" opacity=".8"/><path d="M17 34l3-5 5 2-1 5-4 1z"/><path d="M22 27l3 3-2 4z"/></g></svg>
<div class="dl" style="left:1834px;top:759px;width:90px">cmd</div><div class="dl" style="left:1834px;top:989px;width:90px">Lomtár</div></div>
</body></html>
